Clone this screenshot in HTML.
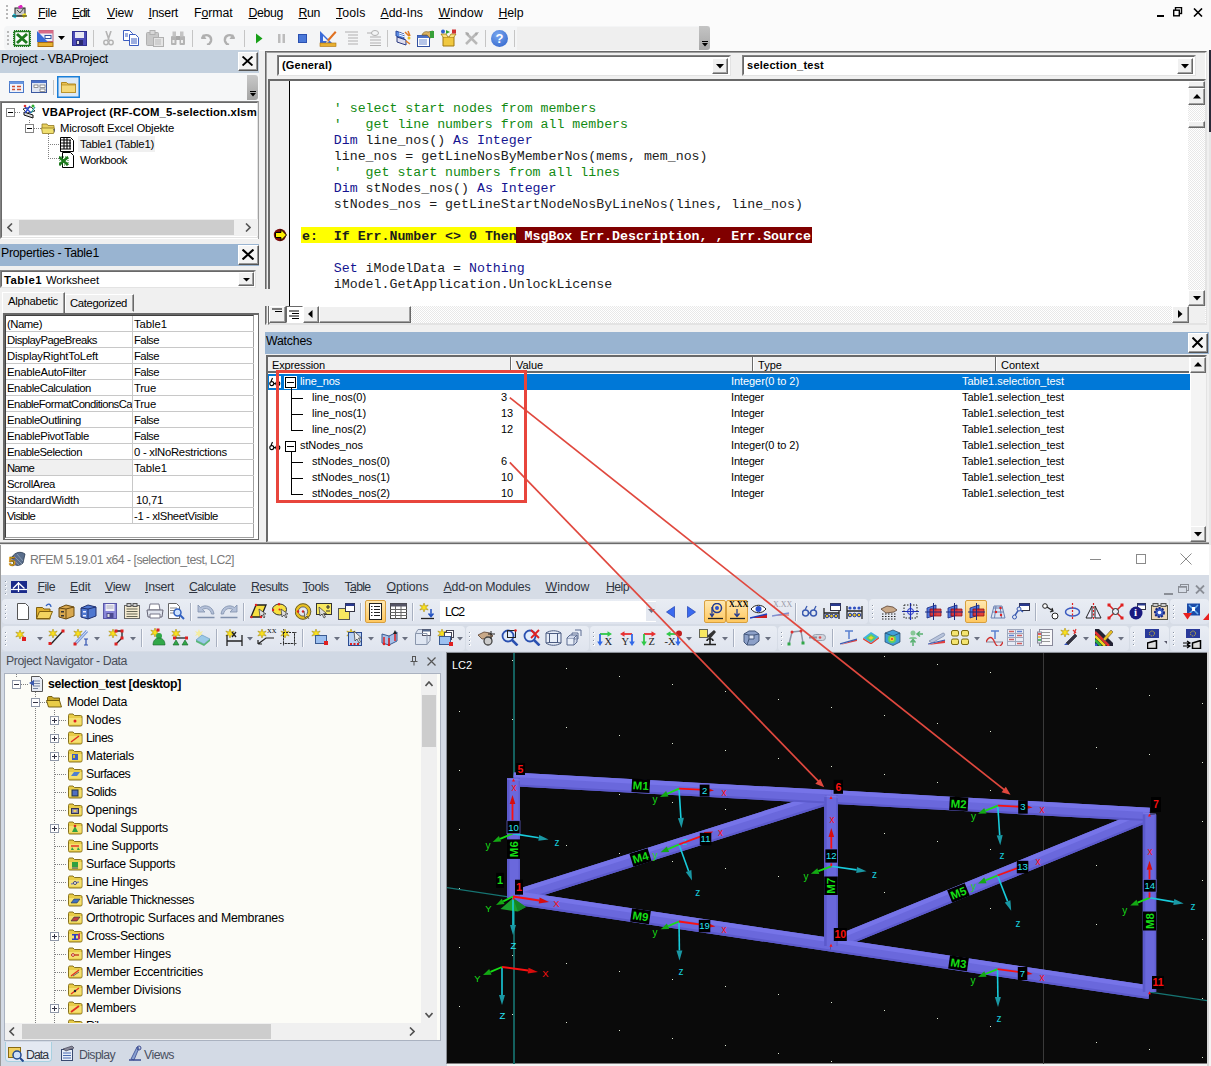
<!DOCTYPE html><html><head><meta charset="utf-8"><title>VBA RFEM</title><style>
html,body{margin:0;padding:0;background:#f0f0f0;}
body{width:1211px;height:1066px;overflow:hidden;position:relative;font-family:"Liberation Sans",sans-serif;font-size:12px;color:#000;}
div,span.t,span.m,span.c,svg{position:absolute;box-sizing:border-box;}
span.t{white-space:pre;line-height:1;}
span.m{white-space:pre;line-height:1;font-family:"Liberation Mono",monospace;font-size:13.25px;color:#1c1c1c;}
u{text-decoration:underline;text-underline-offset:1px;}
.sunk{border:1px solid;border-color:#828282 #fff #fff #828282;}
.btn{background:#f0f0f0;border:1px solid;border-color:#fff #696969 #696969 #fff;box-shadow:inset -1px -1px 0 #a0a0a0;}
</style></head><body><div style="left:0px;top:0px;width:1209px;height:51px;background:#fbfbfb;"></div>
<div style="left:1209px;top:0px;width:2px;height:545px;background:#e6e6e6;"></div>
<div style="left:1209px;top:0px;width:2px;height:50px;background:#fbfbfb;"></div>
<div style="left:1209px;top:50px;width:2px;height:82px;background:#2a2a38;"></div>
<div style="left:6px;top:5px;width:2px;height:2px;background:#b8b8b8;"></div>
<div style="left:6px;top:9px;width:2px;height:2px;background:#b8b8b8;"></div>
<div style="left:6px;top:13px;width:2px;height:2px;background:#b8b8b8;"></div>
<div style="left:6px;top:17px;width:2px;height:2px;background:#b8b8b8;"></div>
<svg style="left:12px;top:5px" width="17" height="15" viewBox="0 0 17 15"><rect x="3" y="3" width="10" height="8" fill="#c8c8c8" stroke="#222" stroke-width="1"/><path d="M5 5l3 3 4-5" stroke="#444" fill="none"/><rect x="6.5" y="0.5" width="4" height="3" fill="#e020c0" transform="rotate(-30 8 2)"/><rect x="0.5" y="9" width="4" height="3.5" fill="#20c8e0" transform="rotate(30 2 11)"/><rect x="10.5" y="9" width="4" height="3.5" fill="#f0e020" transform="rotate(-30 12 11)"/><path d="M0 11h15" stroke="#222"/></svg>
<span class="t" style="left:38px;top:7px;font-size:12.3px;letter-spacing:-0.330px;"><u>F</u>ile</span>
<span class="t" style="left:72px;top:7px;font-size:12.3px;letter-spacing:-1.049px;"><u>E</u>dit</span>
<span class="t" style="left:107px;top:7px;font-size:12.3px;letter-spacing:-0.110px;"><u>V</u>iew</span>
<span class="t" style="left:148.5px;top:7px;font-size:12.3px;letter-spacing:-0.210px;"><u>I</u>nsert</span>
<span class="t" style="left:194px;top:7px;font-size:12.3px;letter-spacing:-0.076px;">F<u>o</u>rmat</span>
<span class="t" style="left:248.5px;top:7px;font-size:12.3px;letter-spacing:-0.349px;"><u>D</u>ebug</span>
<span class="t" style="left:298.5px;top:7px;font-size:12.3px;letter-spacing:-0.355px;"><u>R</u>un</span>
<span class="t" style="left:336px;top:7px;font-size:12.3px;letter-spacing:0.157px;"><u>T</u>ools</span>
<span class="t" style="left:380.5px;top:7px;font-size:12.3px;letter-spacing:0.016px;"><u>A</u>dd-Ins</span>
<span class="t" style="left:438.5px;top:7px;font-size:12.3px;letter-spacing:0.126px;"><u>W</u>indow</span>
<span class="t" style="left:498.5px;top:7px;font-size:12.3px;letter-spacing:-0.074px;"><u>H</u>elp</span>
<div style="left:1157px;top:15px;width:7px;height:2px;background:#000;"></div>
<svg style="left:1173px;top:7px" width="10" height="10" viewBox="0 0 10 10"><rect x="2.5" y="0.5" width="6" height="6" fill="none" stroke="#000" stroke-width="1.4"/><rect x="0.7" y="3.2" width="5.6" height="5.6" fill="#fbfbfb" stroke="#000" stroke-width="1.4"/></svg>
<svg style="left:1193px;top:8px" width="10" height="9" viewBox="0 0 10 9"><path d="M1 0.5l8 8M9 0.5l-8 8" stroke="#000" stroke-width="1.6"/></svg>
<div style="left:4px;top:26px;width:706px;height:24px;background:#f4f5f6;border-radius:4px 0 0 4px;"></div>
<div style="left:517px;top:27px;width:183px;height:23px;background:#efefef;"></div>
<div style="left:699px;top:26px;width:11px;height:24px;background:linear-gradient(#c4c4c4,#a8a8a8);border-radius:0 3px 3px 0;"></div>
<div style="left:702px;top:41px;width:6px;height:1px;background:#000;"></div>
<svg style="left:702px;top:43px" width="6" height="4"><path d="M0 0h6l-3 3.5z" fill="#000"/></svg>
<div style="left:7px;top:31px;width:2px;height:2px;background:#b8b8b8;"></div>
<div style="left:7px;top:35px;width:2px;height:2px;background:#b8b8b8;"></div>
<div style="left:7px;top:39px;width:2px;height:2px;background:#b8b8b8;"></div>
<div style="left:7px;top:43px;width:2px;height:2px;background:#b8b8b8;"></div>
<svg style="left:13px;top:30px" width="18" height="17" viewBox="0 0 18 17"><rect x="1" y="1" width="16" height="15" fill="#fff" stroke="#1e7a1e" stroke-width="2" stroke-dasharray="1 1"/><rect x="1.5" y="1.5" width="15" height="14" fill="none" stroke="#1e7a1e" stroke-width="1.5"/><path d="M4 4l10 9M14 4l-10 9" stroke="#1e7a1e" stroke-width="3"/></svg>
<svg style="left:36px;top:30px" width="18" height="17" viewBox="0 0 18 17"><rect x="3" y="0.5" width="14" height="11" fill="#e8eef8" stroke="#c06078"/><rect x="3" y="0.5" width="14" height="3" fill="#d86a88"/><rect x="9" y="5.5" width="6" height="3" fill="#fff" stroke="#3050a0"/><path d="M1 1v11h11z" fill="#3a6ad8"/><rect x="2" y="12.5" width="15" height="4" fill="#e8b030" stroke="#a87010"/></svg>
<svg style="left:58px;top:36px" width="7" height="4" viewBox="0 0 7 4"><path d="M0 0h7l-3.5 4z" fill="#000"/></svg>
<svg style="left:72px;top:31px" width="15" height="15" viewBox="0 0 15 15"><rect x="0.5" y="0.5" width="14" height="14" fill="#4a4ab8" stroke="#303090"/><rect x="3" y="1" width="9" height="6" fill="#e8e8f4"/><rect x="4" y="9" width="7" height="5" fill="#2a2a70"/><rect x="5" y="10" width="2" height="3" fill="#ddd"/></svg>
<div style="left:93px;top:30px;width:1px;height:17px;background:#c5c5c5;"></div>
<svg style="left:103px;top:31px" width="11" height="15" viewBox="0 0 11 15"><path d="M3 0l3 9M8 0l-3 9" stroke="#b4b4b4" stroke-width="1.6" fill="none"/><circle cx="3" cy="11.5" r="2.2" fill="none" stroke="#b4b4b4" stroke-width="1.5"/><circle cx="8" cy="11.5" r="2.2" fill="none" stroke="#b4b4b4" stroke-width="1.5"/></svg>
<svg style="left:123px;top:30px" width="17" height="17" viewBox="0 0 17 17"><path d="M0.5 0.5h6l3 3v7h-9z" fill="#fff" stroke="#3a5cc0"/><path d="M6.5 4.500h6l3 3v8h-9z" fill="#fff" stroke="#3a5cc0"/><path d="M8 9h6M8 11h6M8 13h6" stroke="#3a5cc0"/><path d="M2 4h3M2 6h3" stroke="#3a5cc0"/></svg>
<svg style="left:146px;top:30px" width="19" height="17" viewBox="0 0 19 17"><rect x="0.5" y="2.5" width="12" height="13" rx="1" fill="#c8c8c8" stroke="#b0b0b0"/><rect x="4" y="0.500" width="5" height="4" fill="#d8d8d8" stroke="#b0b0b0"/><rect x="7.500" y="7.500" width="10" height="9" fill="#e4e4e4" stroke="#b0b0b0"/><path d="M9 10h6M9 12h6M9 14h6" stroke="#bbb"/></svg>
<svg style="left:170px;top:31px" width="16" height="15" viewBox="0 0 16 15"><rect x="1" y="5" width="5.500" height="9" rx="1" fill="#b4b4b4"/><rect x="9.500" y="5" width="5.500" height="9" rx="1" fill="#b4b4b4"/><rect x="2.500" y="0.500" width="3.500" height="5" fill="#c4c4c4"/><rect x="10" y="0.500" width="3.500" height="5" fill="#c4c4c4"/><rect x="6" y="5" width="4" height="4" fill="#a8a8a8"/><rect x="2.500" y="9" width="2" height="3" fill="#eee"/><rect x="11" y="9" width="2" height="3" fill="#eee"/></svg>
<div style="left:192px;top:30px;width:1px;height:17px;background:#c5c5c5;"></div>
<svg style="left:200px;top:32px" width="14" height="13" viewBox="0 0 14 13"><path d="M3 2l-2 5l5.500 0" fill="#b0b0b0"/><path d="M2 6c3-5 10-3 9 3c-.5 2-2 3.500-4 4" fill="none" stroke="#b0b0b0" stroke-width="2.400"/></svg>
<svg style="left:221.5px;top:32px" width="14" height="13" viewBox="0 0 14 13"><path d="M11 2l2 5l-5.500 0" fill="#b0b0b0"/><path d="M12 6c-3-5-10-3-9 3c.5 2 2 3.500 4 4" fill="none" stroke="#b0b0b0" stroke-width="2.400"/></svg>
<div style="left:244px;top:30px;width:1px;height:17px;background:#c5c5c5;"></div>
<svg style="left:255px;top:33px" width="8" height="11" viewBox="0 0 8 11"><path d="M1 0.500l6.500 5l-6.500 5z" fill="#18a018"/></svg>
<svg style="left:277px;top:34px" width="9" height="9" viewBox="0 0 9 9"><rect x="1" y="0" width="2.500" height="9" fill="#bcbcbc"/><rect x="5.500" y="0" width="2.500" height="9" fill="#bcbcbc"/></svg>
<svg style="left:298px;top:34px" width="9" height="9" viewBox="0 0 9 9"><rect x="0.500" y="0.500" width="8" height="8" fill="#4a78d8" stroke="#2a50b0"/></svg>
<svg style="left:319px;top:30px" width="18" height="17" viewBox="0 0 18 17"><path d="M1 1v12h12z" fill="#3a6ad8"/><path d="M4 6v5h5z" fill="#f4f5f6"/><rect x="1" y="13" width="16" height="3.500" fill="#e8b030" stroke="#a87010" stroke-width=".6"/><path d="M8 10l8-9l1.500 1.500l-8 9z" fill="#e07020"/><path d="M8 10l-1 3l3-1z" fill="#f0d0a0"/></svg>
<svg style="left:345px;top:31px" width="14" height="14" viewBox="0 0 14 14"><path d="M0 1h13M3 4h10M3 7h10M3 10h10M3 13h10" stroke="#b0b0b0" stroke-width="1.200"/></svg>
<svg style="left:366.5px;top:30px" width="15" height="16" viewBox="0 0 15 16"><ellipse cx="8" cy="3" rx="3.500" ry="2.500" fill="none" stroke="#b0b0b0"/><path d="M0 3h5M3 7h11M3 10h11M3 13h11M3 15.500h11" stroke="#b0b0b0" stroke-width="1.200"/></svg>
<div style="left:387px;top:30px;width:1px;height:17px;background:#c5c5c5;"></div>
<svg style="left:394px;top:29px" width="17" height="18" viewBox="0 0 17 18"><path d="M2 2l8 3v5l-8-3z" fill="#5a8ae0" stroke="#2a4aa0"/><path d="M3 8l9 3v5l-9-3z" fill="#dde" stroke="#2a3a80"/><path d="M5 4l6 2M5 6l6 2" stroke="#fff"/><path d="M11 3l4 4M14 2l2 5M12 12l4 3" stroke="#e07a20" stroke-width="1.500"/><circle cx="15" cy="9" r="1.500" fill="#e8c020"/></svg>
<svg style="left:416.5px;top:30px" width="17" height="17" viewBox="0 0 17 17"><rect x="0.500" y="5.500" width="12" height="11" fill="#fff" stroke="#3050a0"/><rect x="0.500" y="5.500" width="12" height="2.500" fill="#4a70c8"/><path d="M2 10h8M2 12h8M2 14h8" stroke="#6a8ad0"/><path d="M5 5c1-3 4-4 6-3l5-1v6l-3 1l-3-3z" fill="#d8b060" stroke="#806020" stroke-width=".7"/><path d="M13 1h4v7h-4z" fill="#38a038"/></svg>
<svg style="left:439.5px;top:29px" width="17" height="18" viewBox="0 0 17 18"><path d="M3 8h11v9h-11z" fill="#f0c840" stroke="#a07810"/><path d="M3 8l-2-3h5l2 3M14 8l2-3h-5l-2 3" fill="#f8e080" stroke="#a07810" stroke-width=".8"/><rect x="12" y="0.500" width="4" height="4" fill="#d03030"/><circle cx="3" cy="2.500" r="2" fill="#3060d0"/><path d="M6 1l4 2l-4 2z" fill="#30a030"/></svg>
<svg style="left:463.5px;top:31px" width="16" height="15" viewBox="0 0 16 15"><path d="M2 2l11 11M13 2l-11 11" stroke="#b8b8b8" stroke-width="2.500"/><path d="M1 1l4 1l-1 3z M15 1l-4 1l1 3z" fill="#a8a8a8"/></svg>
<div style="left:485px;top:30px;width:1px;height:17px;background:#c5c5c5;"></div>
<div style="left:491px;top:30px;width:17px;height:17px;border-radius:50%;background:radial-gradient(circle at 40% 30%,#7aa8f0,#2a5ec8);"></div>
<span class="t" style="left:495.5px;top:32px;font-size:13px;font-weight:bold;color:#fff;">?</span>
<div style="left:514px;top:30px;width:1px;height:17px;background:#c5c5c5;"></div>
<div style="left:0px;top:50px;width:259px;height:23px;background:#c3d0de;"></div>
<span class="t" style="left:1px;top:53px;font-size:12.3px;letter-spacing:-0.255px;">Project - VBAProject</span>
<div style="left:238px;top:52px;width:20px;height:19px;background:#f4f4f4;border:1px solid;border-color:#fff #555 #555 #fff;box-shadow:inset -1px -1px 0 #999;"></div>
<svg style="left:242px;top:56px" width="11" height="10" viewBox="0 0 10 10" preserveAspectRatio="none"><path d="M0.500 0.500l9 9M9.500 0.500l-9 9" stroke="#000" stroke-width="1.800"/></svg>
<div style="left:0px;top:73px;width:259px;height:28px;background:#f6f7f8;"></div>
<div style="left:247px;top:75px;width:11px;height:25px;background:linear-gradient(#c8c8c8,#a4a4a4);border-radius:0 3px 3px 0;"></div>
<div style="left:250px;top:91px;width:6px;height:1px;background:#000;"></div>
<svg style="left:250px;top:93px" width="6" height="4"><path d="M0 0h6l-3 3.500z" fill="#000"/></svg>
<svg style="left:9px;top:81px" width="15" height="12" viewBox="0 0 15 12"><rect x="0.500" y="0.500" width="14" height="11" fill="#f0f4fc" stroke="#4a78c8"/><rect x="0.500" y="0.500" width="14" height="2.500" fill="#6a98e0"/><path d="M3 5.500h3M8 5.500h4M3 8.500h3M8 8.500h4" stroke="#d05030" stroke-width="1.500"/></svg>
<svg style="left:31px;top:80px" width="16" height="13" viewBox="0 0 16 13"><rect x="0.500" y="0.500" width="15" height="12" fill="#e0e6f2" stroke="#3a58a0"/><rect x="0.500" y="0.500" width="15" height="2.500" fill="#4a70c8"/><rect x="3" y="5" width="4" height="2.500" fill="#fff" stroke="#555" stroke-width=".6"/><rect x="9" y="5" width="5" height="2.500" fill="#fff" stroke="#555" stroke-width=".6"/><rect x="9" y="9" width="5" height="2.500" fill="#fff" stroke="#555" stroke-width=".6"/></svg>
<div style="left:53px;top:80px;width:1px;height:15px;background:#c5c5c5;"></div>
<div style="left:57px;top:76px;width:23px;height:22px;background:#dce9f6;border:1px solid #1a7fd8;box-shadow:inset 0 0 0 .5px #1a7fd8;"></div>
<svg style="left:61px;top:81px" width="15" height="12" viewBox="0 0 15 12"><path d="M0.500 1.500h5l1.500 1.500h7.500v8.500h-14z" fill="#e8c050" stroke="#b08820"/><path d="M0.500 4h14v7.500h-14z" fill="#f4d878" stroke="#b08820" stroke-width=".7"/></svg>
<div style="left:0px;top:101px;width:259px;height:138px;background:#fff;border:1px solid;border-color:#828282 #fff #fff #828282;"></div>
<div style="left:1px;top:102px;width:257px;height:136px;border:1px solid;border-color:#696969 #e3e3e3 #e3e3e3 #696969;background:#fff;"></div>
<div style="left:258px;top:101px;width:1px;height:138px;background:#a0a0a0;"></div>
<div style="left:6px;top:108px;width:9px;height:9px;background:#fff;border:1px solid #848484;"></div>
<div style="left:8px;top:112px;width:5px;height:1px;background:#000;"></div>
<div style="left:15px;top:112px;width:6px;height:1px;background-image:linear-gradient(90deg,#808080 50%,transparent 50%);background-size:2px 1px;"></div>
<svg style="left:21px;top:103px" width="16" height="16" viewBox="0 0 16 16"><path d="M3 9l9 3v3l-9-3z" fill="#ddd" stroke="#111"/><path d="M2 6l8-2l4 4l-8 2z" fill="#fff" stroke="#111" stroke-width=".8"/><path d="M4 4l6 6M9 3l-5 7" stroke="#2a4ad0" stroke-width="1.300"/><circle cx="12" cy="3" r="1.500" fill="#30b030"/><circle cx="4" cy="3" r="1.300" fill="#e03030"/><path d="M10 10l4-6" stroke="#20a0a0" stroke-width="1.200"/></svg>
<span class="t" style="left:42px;top:106.5px;font-size:11.3px;letter-spacing:0.187px;font-weight:bold;">VBAProject (RF-COM_5-selection.xlsm</span>
<div style="left:29px;top:120px;width:1px;height:4px;background-image:linear-gradient(#808080 50%,transparent 50%);background-size:1px 2px;"></div>
<div style="left:25px;top:124px;width:9px;height:9px;background:#fff;border:1px solid #848484;"></div>
<div style="left:27px;top:128px;width:5px;height:1px;background:#000;"></div>
<div style="left:34px;top:128px;width:7px;height:1px;background-image:linear-gradient(90deg,#808080 50%,transparent 50%);background-size:2px 1px;"></div>
<svg style="left:41px;top:122px" width="15" height="12" viewBox="0 0 15 12"><path d="M1 2h5l1 1.500h6v3h-12z" fill="#e8d060" stroke="#907820" stroke-width=".8"/><path d="M0.500 6h13l-1 5.500h-11z" fill="#f0e070" stroke="#907820" stroke-width=".8"/><path d="M12 7l2 0v4z" fill="#666"/></svg>
<span class="t" style="left:60px;top:123px;font-size:11.3px;letter-spacing:-0.204px;">Microsoft Excel Objekte</span>
<div style="left:48px;top:134px;width:1px;height:24px;background-image:linear-gradient(#808080 50%,transparent 50%);background-size:1px 2px;"></div>
<div style="left:48px;top:144px;width:11px;height:1px;background-image:linear-gradient(90deg,#808080 50%,transparent 50%);background-size:2px 1px;"></div>
<div style="left:48px;top:158px;width:11px;height:1px;background-image:linear-gradient(90deg,#808080 50%,transparent 50%);background-size:2px 1px;"></div>
<div style="left:78px;top:136px;width:77px;height:16px;background:#f0f0f0;"></div>
<svg style="left:59px;top:137px" width="16" height="15" viewBox="0 0 16 15"><path d="M1.500 0.500h10l3 3v11h-13z" fill="#fff" stroke="#000"/><path d="M2 3h10M2 6h10M2 9h10M2 12h10M5 1v11M8 1v11M11 3v9" stroke="#000" stroke-width="1.100"/></svg>
<span class="t" style="left:80px;top:139px;font-size:11.3px;letter-spacing:-0.217px;">Table1 (Table1)</span>
<svg style="left:59px;top:152px" width="16" height="16" viewBox="0 0 16 16"><path d="M3.500 0.500h8l3 3v12h-11z" fill="#fff" stroke="#000"/><path d="M0 5l9 8M9 5l-9 8" stroke="#1e7a1e" stroke-width="2.500"/><rect x="0" y="5" width="9" height="8" fill="none" stroke="#1e7a1e" stroke-dasharray="1 1"/></svg>
<span class="t" style="left:80px;top:155px;font-size:11.3px;letter-spacing:-0.458px;">Workbook</span>
<div style="left:2px;top:219px;width:256px;height:17px;background:#f0f0f0;"></div>
<div style="left:19px;top:220px;width:215px;height:15px;background:#cdcdcd;"></div>
<svg style="left:7px;top:223px" width="6" height="9"><path d="M5 0.500l-4 4l4 4" stroke="#555" stroke-width="1.600" fill="none"/></svg>
<svg style="left:245px;top:223px" width="6" height="9"><path d="M1 0.500l4 4l-4 4" stroke="#555" stroke-width="1.600" fill="none"/></svg>
<div style="left:0px;top:239px;width:259px;height:5px;background:#f0f0f0;"></div>
<div style="left:0px;top:244px;width:259px;height:22px;background:#99b4d1;"></div>
<span class="t" style="left:1px;top:247px;font-size:12.3px;letter-spacing:-0.264px;">Properties - Table1</span>
<div style="left:238px;top:245px;width:21px;height:20px;background:#f4f4f4;border:1px solid;border-color:#fff #555 #555 #fff;box-shadow:inset -1px -1px 0 #999;"></div>
<svg style="left:242px;top:249px" width="12" height="11" viewBox="0 0 10 10" preserveAspectRatio="none"><path d="M0.500 0.500l9 9M9.500 0.500l-9 9" stroke="#000" stroke-width="1.800"/></svg>
<div style="left:0px;top:270px;width:256px;height:18px;background:#fff;border:1px solid;border-color:#828282 #e3e3e3 #e3e3e3 #828282;"></div>
<div style="left:1px;top:271px;width:254px;height:16px;border:1px solid;border-color:#696969 #fff #fff #696969;"></div>
<span class="t" style="left:4px;top:275px;font-size:11.3px;letter-spacing:0.507px;font-weight:bold;">Table1</span>
<span class="t" style="left:46px;top:275px;font-size:11.3px;letter-spacing:-0.089px;">Worksheet</span>
<div style="left:238px;top:272px;width:16px;height:14px;background:#f0f0f0;border:1px solid;border-color:#fff #696969 #696969 #fff;box-shadow:inset -1px -1px 0 #a0a0a0;"></div>
<svg style="left:243px;top:278px" width="7" height="4"><path d="M0 0h7l-3.500 3.500z" fill="#000"/></svg>
<div style="left:2px;top:292px;width:63px;height:22px;background:#f0f0f0;border:1px solid;border-color:#fff #696969 transparent #fff;box-shadow:inset -1px 0 0 #a0a0a0;"></div>
<span class="t" style="left:8px;top:296px;font-size:11.3px;letter-spacing:-0.277px;">Alphabetic</span>
<div style="left:65px;top:294px;width:69px;height:18px;background:#f0f0f0;border:1px solid;border-color:#fff #696969 transparent #fff;box-shadow:inset -1px 0 0 #a0a0a0;"></div>
<span class="t" style="left:70px;top:298px;font-size:11.3px;letter-spacing:-0.357px;">Categorized</span>
<div style="left:0px;top:313px;width:259px;height:230px;background:#f0f0f0;"></div>
<div style="left:3px;top:313px;width:256px;height:227px;background:#fff;border:2px solid #696969;border-right-width:1px;border-bottom-width:1px;"></div>
<div style="left:5px;top:315px;width:249px;height:223px;border:1px solid #a0a0a0;border-left-color:#404040;border-top-color:#404040;"></div>
<div style="left:6px;top:331px;width:248px;height:1px;background:#c8c8c8;"></div>
<div style="left:7px;top:316px;width:125px;height:15px;overflow:hidden;"><span class="t" style="left:0;top:3px;font-size:11.3px;letter-spacing:-0.445px">(Name)</span></div>
<span class="t" style="left:134px;top:319px;font-size:11.3px;letter-spacing:-0.050px;">Table1</span>
<div style="left:6px;top:347px;width:248px;height:1px;background:#c8c8c8;"></div>
<div style="left:7px;top:332px;width:125px;height:15px;overflow:hidden;"><span class="t" style="left:0;top:3px;font-size:11.3px;letter-spacing:-0.507px">DisplayPageBreaks</span></div>
<span class="t" style="left:134px;top:335px;font-size:11.3px;letter-spacing:-0.527px;">False</span>
<div style="left:6px;top:363px;width:248px;height:1px;background:#c8c8c8;"></div>
<div style="left:7px;top:348px;width:125px;height:15px;overflow:hidden;"><span class="t" style="left:0;top:3px;font-size:11.3px;letter-spacing:-0.178px">DisplayRightToLeft</span></div>
<span class="t" style="left:134px;top:351px;font-size:11.3px;letter-spacing:-0.527px;">False</span>
<div style="left:6px;top:379px;width:248px;height:1px;background:#c8c8c8;"></div>
<div style="left:7px;top:364px;width:125px;height:15px;overflow:hidden;"><span class="t" style="left:0;top:3px;font-size:11.3px;letter-spacing:-0.284px">EnableAutoFilter</span></div>
<span class="t" style="left:134px;top:367px;font-size:11.3px;letter-spacing:-0.527px;">False</span>
<div style="left:6px;top:395px;width:248px;height:1px;background:#c8c8c8;"></div>
<div style="left:7px;top:380px;width:125px;height:15px;overflow:hidden;"><span class="t" style="left:0;top:3px;font-size:11.3px;letter-spacing:-0.417px">EnableCalculation</span></div>
<span class="t" style="left:134px;top:383px;font-size:11.3px;letter-spacing:-0.204px;">True</span>
<div style="left:6px;top:411px;width:248px;height:1px;background:#c8c8c8;"></div>
<div style="left:7px;top:396px;width:125px;height:15px;overflow:hidden;"><span class="t" style="left:0;top:3px;font-size:11.3px;letter-spacing:-0.575px">EnableFormatConditionsCa</span></div>
<span class="t" style="left:134px;top:399px;font-size:11.3px;letter-spacing:-0.204px;">True</span>
<div style="left:6px;top:427px;width:248px;height:1px;background:#c8c8c8;"></div>
<div style="left:7px;top:412px;width:125px;height:15px;overflow:hidden;"><span class="t" style="left:0;top:3px;font-size:11.3px;letter-spacing:-0.386px">EnableOutlining</span></div>
<span class="t" style="left:134px;top:415px;font-size:11.3px;letter-spacing:-0.527px;">False</span>
<div style="left:6px;top:443px;width:248px;height:1px;background:#c8c8c8;"></div>
<div style="left:7px;top:428px;width:125px;height:15px;overflow:hidden;"><span class="t" style="left:0;top:3px;font-size:11.3px;letter-spacing:-0.333px">EnablePivotTable</span></div>
<span class="t" style="left:134px;top:431px;font-size:11.3px;letter-spacing:-0.527px;">False</span>
<div style="left:6px;top:459px;width:248px;height:1px;background:#c8c8c8;"></div>
<div style="left:7px;top:444px;width:125px;height:15px;overflow:hidden;"><span class="t" style="left:0;top:3px;font-size:11.3px;letter-spacing:-0.445px">EnableSelection</span></div>
<span class="t" style="left:134px;top:447px;font-size:11.3px;letter-spacing:-0.248px;">0 - xlNoRestrictions</span>
<div style="left:6px;top:460px;width:126px;height:15px;background:#f0f0f0;"></div>
<div style="left:6px;top:475px;width:248px;height:1px;background:#c8c8c8;"></div>
<div style="left:7px;top:460px;width:125px;height:15px;overflow:hidden;"><span class="t" style="left:0;top:3px;font-size:11.3px;letter-spacing:-0.786px">Name</span></div>
<span class="t" style="left:134px;top:463px;font-size:11.3px;letter-spacing:-0.050px;">Table1</span>
<div style="left:6px;top:491px;width:248px;height:1px;background:#c8c8c8;"></div>
<div style="left:7px;top:476px;width:125px;height:15px;overflow:hidden;"><span class="t" style="left:0;top:3px;font-size:11.3px;letter-spacing:-0.412px">ScrollArea</span></div>
<div style="left:6px;top:507px;width:248px;height:1px;background:#c8c8c8;"></div>
<div style="left:7px;top:492px;width:125px;height:15px;overflow:hidden;"><span class="t" style="left:0;top:3px;font-size:11.3px;letter-spacing:-0.211px">StandardWidth</span></div>
<span class="t" style="left:136px;top:495px;font-size:11.3px;letter-spacing:-0.255px;">10,71</span>
<div style="left:6px;top:523px;width:248px;height:1px;background:#c8c8c8;"></div>
<div style="left:7px;top:508px;width:125px;height:15px;overflow:hidden;"><span class="t" style="left:0;top:3px;font-size:11.3px;letter-spacing:-0.726px">Visible</span></div>
<span class="t" style="left:134px;top:511px;font-size:11.3px;letter-spacing:-0.361px;">-1 - xlSheetVisible</span>
<div style="left:132px;top:316px;width:1px;height:208px;background:#c8c8c8;"></div>
<div style="left:259px;top:51px;width:6px;height:492px;background:#f0f0f0;"></div>
<div style="left:265px;top:51px;width:942px;height:274px;background:#f0f0f0;border:2px solid;border-color:#696969 #e3e3e3 #e3e3e3 #696969;"></div>
<div style="left:266px;top:52px;width:940px;height:272px;border:1px solid;border-color:#a0a0a0 #fff #fff #a0a0a0;"></div>
<div style="left:277px;top:55px;width:454px;height:21px;background:#fff;border:2px solid;border-color:#828282 #e3e3e3 #e3e3e3 #828282;"></div>
<div style="left:278px;top:56px;width:452px;height:19px;border:1px solid;border-color:#696969 #fff #fff #696969;"></div>
<div style="left:712px;top:58px;width:16px;height:16px;background:#f0f0f0;border:1px solid;border-color:#fff #696969 #696969 #fff;box-shadow:inset -1px -1px 0 #a0a0a0;"></div>
<svg style="left:716px;top:64px" width="8" height="5"><path d="M0 0h8l-4 4.500z" fill="#000"/></svg>
<span class="t" style="left:282px;top:60px;font-size:11px;letter-spacing:0.190px;font-weight:bold;">(General)</span>
<div style="left:742px;top:55px;width:454px;height:21px;background:#fff;border:2px solid;border-color:#828282 #e3e3e3 #e3e3e3 #828282;"></div>
<div style="left:743px;top:56px;width:452px;height:19px;border:1px solid;border-color:#696969 #fff #fff #696969;"></div>
<div style="left:1177px;top:58px;width:16px;height:16px;background:#f0f0f0;border:1px solid;border-color:#fff #696969 #696969 #fff;box-shadow:inset -1px -1px 0 #a0a0a0;"></div>
<svg style="left:1181px;top:64px" width="8" height="5"><path d="M0 0h8l-4 4.500z" fill="#000"/></svg>
<span class="t" style="left:747px;top:60px;font-size:11px;letter-spacing:0.260px;font-weight:bold;">selection_test</span>
<div style="left:268px;top:79px;width:938px;height:246px;background:#fff;border:2px solid;border-color:#696969 #e3e3e3 #e3e3e3 #696969;"></div>
<div style="left:270px;top:81px;width:19px;height:225px;background:#f0f0f0;"></div>
<div style="left:289px;top:81px;width:1px;height:225px;background:#000;"></div>
<div style="left:290px;top:81px;width:2px;height:225px;background:#fff;"></div>
<div style="left:259px;top:289px;width:11px;height:17px;background:#f0f0f0;"></div>
<span class="m" style="left:333.80px;top:101.5px;color:#128a12;">' select start nodes from members</span>
<span class="m" style="left:333.80px;top:117.5px;color:#128a12;">'   get line numbers from all members</span>
<span class="m" style="left:333.80px;top:133.5px;"><span style="color:#141490">Dim</span> line_nos() <span style="color:#141490">As Integer</span></span>
<span class="m" style="left:333.80px;top:149.5px;">line_nos = getLineNosByMemberNos(mems, mem_nos)</span>
<span class="m" style="left:333.80px;top:165.5px;color:#128a12;">'   get start numbers from all lines</span>
<span class="m" style="left:333.80px;top:181.5px;"><span style="color:#141490">Dim</span> stNodes_nos() <span style="color:#141490">As Integer</span></span>
<span class="m" style="left:333.80px;top:197.5px;">stNodes_nos = getLineStartNodeNosByLineNos(lines, line_nos)</span>
<div style="left:301px;top:227px;width:215px;height:16px;background:#ffff00;"></div>
<div style="left:516px;top:227px;width:296px;height:16px;background:#800000;"></div>
<span class="m" style="left:302.00px;top:229.5px;font-weight:bold;">e:  If Err.Number &lt;&gt; 0 Then</span>
<span class="m" style="left:524.60px;top:229.5px;font-weight:bold;color:#fff;">MsgBox Err.Description, , Err.Source</span>
<span class="m" style="left:333.80px;top:261.5px;"><span style="color:#141490">Set</span> iModelData = <span style="color:#141490">Nothing</span></span>
<span class="m" style="left:333.80px;top:277.5px;">iModel.GetApplication.UnlockLicense</span>
<svg style="left:273px;top:228px" width="15" height="14" viewBox="0 0 15 14"><circle cx="7" cy="7" r="6.200" fill="#7a0c0c"/><path d="M2.500 4.500h5.500v-3l5.500 5.500l-5.500 5.500v-3h-5.500z" fill="#ffee00" stroke="#000" stroke-width="1"/></svg>
<div style="left:1188px;top:81px;width:17px;height:225px;background-color:#fff;background-image:linear-gradient(45deg,#e8e8e8 25%,transparent 25%,transparent 75%,#e8e8e8 75%),linear-gradient(45deg,#e8e8e8 25%,transparent 25%,transparent 75%,#e8e8e8 75%);background-size:2px 2px;background-position:0 0,1px 1px;"></div>
<div style="left:1188px;top:81px;width:17px;height:7px;background:#f0f0f0;border:1px solid;border-color:#fff #696969 #696969 #fff;box-shadow:inset -1px -1px 0 #a0a0a0;"></div>
<div style="left:1188px;top:88px;width:17px;height:17px;background:#f0f0f0;border:1px solid;border-color:#fff #696969 #696969 #fff;box-shadow:inset -1px -1px 0 #a0a0a0;"></div>
<svg style="left:1193px;top:94px" width="8" height="5"><path d="M0 4.500h8l-4-4.500z" fill="#000"/></svg>
<div style="left:1188px;top:121px;width:17px;height:7px;background:#f0f0f0;border:1px solid;border-color:#fff #696969 #696969 #fff;box-shadow:inset -1px -1px 0 #a0a0a0;"></div>
<div style="left:1188px;top:290px;width:17px;height:16px;background:#f0f0f0;border:1px solid;border-color:#fff #696969 #696969 #fff;box-shadow:inset -1px -1px 0 #a0a0a0;"></div>
<svg style="left:1193px;top:296px" width="8" height="5"><path d="M0 0h8l-4 4.500z" fill="#000"/></svg>
<div style="left:269px;top:306px;width:937px;height:17px;background-color:#fff;background-image:linear-gradient(45deg,#e8e8e8 25%,transparent 25%,transparent 75%,#e8e8e8 75%),linear-gradient(45deg,#e8e8e8 25%,transparent 25%,transparent 75%,#e8e8e8 75%);background-size:2px 2px;background-position:0 0,1px 1px;"></div>
<div style="left:269px;top:306px;width:17px;height:17px;background:#f0f0f0;border:1px solid;border-color:#fff #696969 #696969 #fff;box-shadow:inset -1px -1px 0 #a0a0a0;"></div>
<div style="left:286px;top:306px;width:17px;height:17px;background:#fff;border:1px solid;border-color:#696969 #fff #fff #696969;"></div>
<svg style="left:272px;top:308px" width="11" height="6"><path d="M0 1h10M3 3.500h7" stroke="#000" stroke-width="1.200"/></svg>
<svg style="left:289px;top:310px" width="11" height="10"><path d="M0 1h10M3 3.500h7M0 6h10M3 8.500h7" stroke="#000" stroke-width="1.200"/></svg>
<div style="left:303px;top:306px;width:16px;height:17px;background:#f0f0f0;border:1px solid;border-color:#fff #696969 #696969 #fff;box-shadow:inset -1px -1px 0 #a0a0a0;"></div>
<svg style="left:308px;top:310px" width="5" height="8"><path d="M4.500 0v8l-4.500-4z" fill="#000"/></svg>
<div style="left:319px;top:306px;width:92px;height:17px;background:#f0f0f0;border:1px solid;border-color:#fff #696969 #696969 #fff;box-shadow:inset -1px -1px 0 #a0a0a0;"></div>
<div style="left:1172px;top:306px;width:17px;height:17px;background:#f0f0f0;border:1px solid;border-color:#fff #696969 #696969 #fff;box-shadow:inset -1px -1px 0 #a0a0a0;"></div>
<svg style="left:1178px;top:310px" width="5" height="8"><path d="M0 0v8l4.500-4z" fill="#000"/></svg>
<div style="left:1189px;top:306px;width:16px;height:17px;background:#f0f0f0;"></div>
<div style="left:265px;top:325px;width:944px;height:7px;background:#f0f0f0;"></div>
<div style="left:265px;top:332px;width:944px;height:22px;background:#99b4d1;"></div>
<span class="t" style="left:266px;top:335px;font-size:12.3px;letter-spacing:-0.199px;">Watches</span>
<div style="left:1188px;top:333px;width:20px;height:20px;background:#f4f4f4;border:1px solid;border-color:#fff #555 #555 #fff;box-shadow:inset -1px -1px 0 #999;"></div>
<svg style="left:1192px;top:337px" width="11" height="11" viewBox="0 0 10 10" preserveAspectRatio="none"><path d="M0.500 0.500l9 9M9.500 0.500l-9 9" stroke="#000" stroke-width="1.800"/></svg>
<div style="left:265px;top:354px;width:944px;height:189px;background:#f0f0f0;"></div>
<div style="left:266px;top:355px;width:941px;height:188px;background:#fff;border:2px solid;border-color:#696969 #e3e3e3 #e3e3e3 #696969;"></div>
<div style="left:268px;top:357px;width:921px;height:15px;background:#f0f0f0;"></div>
<div style="left:268px;top:371px;width:921px;height:2px;background:#696969;"></div>
<div style="left:510px;top:357px;width:1px;height:14px;background:#696969;"></div>
<div style="left:511px;top:357px;width:1px;height:14px;background:#fff;"></div>
<div style="left:752px;top:357px;width:1px;height:14px;background:#696969;"></div>
<div style="left:753px;top:357px;width:1px;height:14px;background:#fff;"></div>
<div style="left:995px;top:357px;width:1px;height:14px;background:#696969;"></div>
<div style="left:996px;top:357px;width:1px;height:14px;background:#fff;"></div>
<span class="t" style="left:272px;top:360px;font-size:11px;letter-spacing:-0.141px;">Expression</span>
<span class="t" style="left:516px;top:360px;font-size:11px;letter-spacing:-0.063px;">Value</span>
<span class="t" style="left:758px;top:360px;font-size:11px;letter-spacing:0.038px;">Type</span>
<span class="t" style="left:1001px;top:360px;font-size:11px;letter-spacing:0.013px;">Context</span>
<div style="left:1190px;top:357px;width:16px;height:185px;background:#f0f0f0;"></div>
<div style="left:1190px;top:357px;width:16px;height:16px;background:#f0f0f0;border:1px solid;border-color:#fff #696969 #696969 #fff;box-shadow:inset -1px -1px 0 #a0a0a0;"></div>
<svg style="left:1194px;top:362px" width="8" height="5"><path d="M0 4.500h8l-4-4.500z" fill="#000"/></svg>
<div style="left:1190px;top:373px;width:16px;height:153px;background:#f4f4f4;border-left:1px solid #fff;"></div>
<div style="left:1190px;top:526px;width:16px;height:16px;background:#f0f0f0;border:1px solid;border-color:#fff #696969 #696969 #fff;box-shadow:inset -1px -1px 0 #a0a0a0;"></div>
<svg style="left:1194px;top:532px" width="8" height="5"><path d="M0 0h8l-4 4.500z" fill="#000"/></svg>
<div style="left:268px;top:374px;width:922px;height:16px;background:#0078d7;"></div>
<span class="t" style="left:300px;top:376px;font-size:11px;letter-spacing:-0.122px;color:#fff;">line_nos</span>
<span class="t" style="left:731px;top:376px;font-size:11px;letter-spacing:-0.073px;color:#fff;">Integer(0 to 2)</span>
<span class="t" style="left:962px;top:376px;font-size:11px;letter-spacing:-0.035px;color:#fff;">Table1.selection_test</span>
<div style="left:269px;top:376px;width:12px;height:12px;background:#fff;"></div>
<svg style="left:269px;top:376px" width="12" height="12" viewBox="0 0 12 12"><circle cx="2.800" cy="7.600" r="2" fill="none" stroke="#000" stroke-width="1.100"/><circle cx="8.800" cy="7.600" r="2" fill="none" stroke="#000" stroke-width="1.100"/><path d="M2 5.500l1.500-3.500M8 5.500l1.500-3.500M4.800 7.600h2" stroke="#000" stroke-width="1.100" fill="none"/></svg>
<div style="left:284px;top:376px;width:13px;height:13px;background:#fff;"></div>
<div style="left:285px;top:377px;width:11px;height:11px;background:#fff;border:1px solid #000;"></div>
<div style="left:287px;top:382px;width:7px;height:1px;background:#000;"></div>
<span class="t" style="left:312px;top:392px;font-size:11px;letter-spacing:-0.038px;">line_nos(0)</span>
<span class="t" style="left:731px;top:392px;font-size:11px;letter-spacing:-0.178px;">Integer</span>
<span class="t" style="left:962px;top:392px;font-size:11px;letter-spacing:-0.035px;">Table1.selection_test</span>
<span class="t" style="left:501px;top:392px;font-size:11px;letter-spacing:0.000px;">3</span>
<div style="left:291px;top:388px;width:1px;height:10px;background:#000;"></div>
<div style="left:291px;top:398px;width:1px;height:8px;background:#000;"></div>
<div style="left:291px;top:398px;width:12px;height:1px;background:#000;"></div>
<span class="t" style="left:312px;top:408px;font-size:11px;letter-spacing:-0.038px;">line_nos(1)</span>
<span class="t" style="left:731px;top:408px;font-size:11px;letter-spacing:-0.178px;">Integer</span>
<span class="t" style="left:962px;top:408px;font-size:11px;letter-spacing:-0.035px;">Table1.selection_test</span>
<span class="t" style="left:501px;top:408px;font-size:11px;letter-spacing:0.000px;">13</span>
<div style="left:291px;top:406px;width:1px;height:8px;background:#000;"></div>
<div style="left:291px;top:414px;width:1px;height:8px;background:#000;"></div>
<div style="left:291px;top:414px;width:12px;height:1px;background:#000;"></div>
<span class="t" style="left:312px;top:424px;font-size:11px;letter-spacing:-0.038px;">line_nos(2)</span>
<span class="t" style="left:731px;top:424px;font-size:11px;letter-spacing:-0.178px;">Integer</span>
<span class="t" style="left:962px;top:424px;font-size:11px;letter-spacing:-0.035px;">Table1.selection_test</span>
<span class="t" style="left:501px;top:424px;font-size:11px;letter-spacing:0.000px;">12</span>
<div style="left:291px;top:422px;width:1px;height:8px;background:#000;"></div>
<div style="left:291px;top:430px;width:12px;height:1px;background:#000;"></div>
<span class="t" style="left:300px;top:440px;font-size:11px;letter-spacing:-0.109px;">stNodes_nos</span>
<span class="t" style="left:731px;top:440px;font-size:11px;letter-spacing:-0.073px;">Integer(0 to 2)</span>
<span class="t" style="left:962px;top:440px;font-size:11px;letter-spacing:-0.035px;">Table1.selection_test</span>
<div style="left:269px;top:440px;width:12px;height:12px;background:#fff;"></div>
<svg style="left:269px;top:440px" width="12" height="12" viewBox="0 0 12 12"><circle cx="2.800" cy="7.600" r="2" fill="none" stroke="#000" stroke-width="1.100"/><circle cx="8.800" cy="7.600" r="2" fill="none" stroke="#000" stroke-width="1.100"/><path d="M2 5.500l1.500-3.500M8 5.500l1.500-3.500M4.800 7.600h2" stroke="#000" stroke-width="1.100" fill="none"/></svg>
<div style="left:284px;top:440px;width:13px;height:13px;background:#fff;"></div>
<div style="left:285px;top:441px;width:11px;height:11px;background:#fff;border:1px solid #000;"></div>
<div style="left:287px;top:446px;width:7px;height:1px;background:#000;"></div>
<span class="t" style="left:312px;top:456px;font-size:11px;letter-spacing:0.025px;">stNodes_nos(0)</span>
<span class="t" style="left:731px;top:456px;font-size:11px;letter-spacing:-0.178px;">Integer</span>
<span class="t" style="left:962px;top:456px;font-size:11px;letter-spacing:-0.035px;">Table1.selection_test</span>
<span class="t" style="left:501px;top:456px;font-size:11px;letter-spacing:0.000px;">6</span>
<div style="left:291px;top:452px;width:1px;height:10px;background:#000;"></div>
<div style="left:291px;top:462px;width:1px;height:8px;background:#000;"></div>
<div style="left:291px;top:462px;width:12px;height:1px;background:#000;"></div>
<span class="t" style="left:312px;top:472px;font-size:11px;letter-spacing:0.025px;">stNodes_nos(1)</span>
<span class="t" style="left:731px;top:472px;font-size:11px;letter-spacing:-0.178px;">Integer</span>
<span class="t" style="left:962px;top:472px;font-size:11px;letter-spacing:-0.035px;">Table1.selection_test</span>
<span class="t" style="left:501px;top:472px;font-size:11px;letter-spacing:0.000px;">10</span>
<div style="left:291px;top:470px;width:1px;height:8px;background:#000;"></div>
<div style="left:291px;top:478px;width:1px;height:8px;background:#000;"></div>
<div style="left:291px;top:478px;width:12px;height:1px;background:#000;"></div>
<span class="t" style="left:312px;top:488px;font-size:11px;letter-spacing:0.025px;">stNodes_nos(2)</span>
<span class="t" style="left:731px;top:488px;font-size:11px;letter-spacing:-0.178px;">Integer</span>
<span class="t" style="left:962px;top:488px;font-size:11px;letter-spacing:-0.035px;">Table1.selection_test</span>
<span class="t" style="left:501px;top:488px;font-size:11px;letter-spacing:0.000px;">10</span>
<div style="left:291px;top:486px;width:1px;height:8px;background:#000;"></div>
<div style="left:291px;top:494px;width:12px;height:1px;background:#000;"></div>
<div style="left:276px;top:370px;width:251px;height:133px;border:3px solid #e8453c;"></div>
<div style="left:0px;top:542px;width:1209px;height:1px;background:#a8a8a8;"></div>
<div style="left:0px;top:543px;width:1209px;height:1px;background:#6a6a6a;"></div>
<div style="left:0px;top:544px;width:1209px;height:1px;background:#e8e8e8;"></div>
<div style="left:0px;top:545px;width:1209px;height:521px;background:#fff;"></div>
<div style="left:1209px;top:545px;width:2px;height:521px;background:#f4f4f4;"></div>
<div style="left:0px;top:545px;width:1px;height:521px;background:#9a9a9a;"></div>
<svg style="left:9px;top:551px" width="17" height="17" viewBox="0 0 17 17"><path d="M3 6c3-5 9-6 13-3l-2 9c-3 3-7 3-9 1z" fill="#5a6e8c" stroke="#2a3a50" stroke-width=".8"/><path d="M5 5l8 8M8 3l6 7M3 8l7 6" stroke="#9ab" stroke-width=".7"/></svg>
<span class="t" style="left:1px;top:556px;font-size:12px;font-weight:bold;color:#e8b020;left:9px;-webkit-text-stroke:.5px #604000;">5</span>
<span class="t" style="left:30px;top:554px;font-size:12.3px;letter-spacing:-0.523px;color:#7a7a7a;">RFEM 5.19.01 x64 - [selection_test, LC2]</span>
<div style="left:1090px;top:559px;width:11px;height:1px;background:#8a8a8a;"></div>
<div style="left:1136px;top:554px;width:10px;height:10px;border:1px solid #8a8a8a;"></div>
<svg style="left:1180px;top:553px" width="12" height="12"><path d="M0.500 0.500l11 11M11.500 0.500l-11 11" stroke="#8a8a8a" stroke-width="1"/></svg>
<div style="left:1px;top:575px;width:1208px;height:24px;background:#d6dce6;"></div>
<div style="left:5px;top:581px;width:2px;height:2px;background:#f4f6fa;"></div>
<div style="left:5px;top:581px;width:1px;height:1px;background:#8a94a4;"></div>
<div style="left:5px;top:585px;width:2px;height:2px;background:#f4f6fa;"></div>
<div style="left:5px;top:585px;width:1px;height:1px;background:#8a94a4;"></div>
<div style="left:5px;top:589px;width:2px;height:2px;background:#f4f6fa;"></div>
<div style="left:5px;top:589px;width:1px;height:1px;background:#8a94a4;"></div>
<div style="left:5px;top:593px;width:2px;height:2px;background:#f4f6fa;"></div>
<div style="left:5px;top:593px;width:1px;height:1px;background:#8a94a4;"></div>
<svg style="left:11px;top:581px" width="16" height="12" viewBox="0 0 16 12"><rect width="16" height="12" fill="#1a2a8a"/><path d="M0 8.500h16" stroke="#fff" stroke-width="1.200"/><path d="M7.500 1v10M2 7.500l5.500-5.500l6 5.500" stroke="#fff" stroke-width="1.300" fill="none"/></svg>
<span class="t" style="left:37.5px;top:581px;font-size:12.3px;letter-spacing:-0.580px;color:#2e3440;"><u>F</u>ile</span>
<span class="t" style="left:70px;top:581px;font-size:12.3px;letter-spacing:-0.174px;color:#2e3440;"><u>E</u>dit</span>
<span class="t" style="left:105px;top:581px;font-size:12.3px;letter-spacing:-0.360px;color:#2e3440;"><u>V</u>iew</span>
<span class="t" style="left:145px;top:581px;font-size:12.3px;letter-spacing:-0.293px;color:#2e3440;"><u>I</u>nsert</span>
<span class="t" style="left:189px;top:581px;font-size:12.3px;letter-spacing:-0.531px;color:#2e3440;"><u>C</u>alculate</span>
<span class="t" style="left:251px;top:581px;font-size:12.3px;letter-spacing:-0.573px;color:#2e3440;"><u>R</u>esults</span>
<span class="t" style="left:302.5px;top:581px;font-size:12.3px;letter-spacing:-0.543px;color:#2e3440;"><u>T</u>ools</span>
<span class="t" style="left:344.5px;top:581px;font-size:12.3px;letter-spacing:-0.681px;color:#2e3440;">T<u>a</u>ble</span>
<span class="t" style="left:386.5px;top:581px;font-size:12.3px;letter-spacing:-0.056px;color:#2e3440;"><u>O</u>ptions</span>
<span class="t" style="left:443.5px;top:581px;font-size:12.3px;letter-spacing:-0.184px;color:#2e3440;"><u>A</u>dd-on Modules</span>
<span class="t" style="left:545.5px;top:581px;font-size:12.3px;letter-spacing:0.042px;color:#2e3440;"><u>W</u>indow</span>
<span class="t" style="left:606px;top:581px;font-size:12.3px;letter-spacing:-0.574px;color:#2e3440;"><u>H</u>elp</span>
<div style="left:1164px;top:593px;width:9px;height:2px;background:#8a8e96;"></div>
<svg style="left:1178px;top:584px" width="11" height="10"><rect x="2.500" y="0.500" width="8" height="6" fill="none" stroke="#8a8e96"/><rect x="0.500" y="2.500" width="8" height="6" fill="#d6dce6" stroke="#8a8e96"/><path d="M0 3h9" stroke="#8a8e96" stroke-width="1.500"/></svg>
<svg style="left:1195px;top:585px" width="10" height="9"><path d="M1 0.500l8 8M9 0.500l-8 8" stroke="#8a8e96" stroke-width="1.800"/></svg>
<div style="left:1px;top:599px;width:1208px;height:53px;background:#d6dce6;"></div>
<div style="left:2px;top:599px;width:866px;height:25px;background:linear-gradient(#e9edf4,#dfe4ee);border-radius:4px;"></div>
<div style="left:5px;top:605px;width:2px;height:2px;background:#fafbfd;"></div>
<div style="left:5px;top:605px;width:1px;height:1px;background:#8a94a4;"></div>
<div style="left:5px;top:609px;width:2px;height:2px;background:#fafbfd;"></div>
<div style="left:5px;top:609px;width:1px;height:1px;background:#8a94a4;"></div>
<div style="left:5px;top:613px;width:2px;height:2px;background:#fafbfd;"></div>
<div style="left:5px;top:613px;width:1px;height:1px;background:#8a94a4;"></div>
<div style="left:5px;top:617px;width:2px;height:2px;background:#fafbfd;"></div>
<div style="left:5px;top:617px;width:1px;height:1px;background:#8a94a4;"></div>
<div style="left:869px;top:599px;width:300px;height:25px;background:linear-gradient(#e9edf4,#dfe4ee);border-radius:4px;"></div>
<div style="left:872px;top:605px;width:2px;height:2px;background:#fafbfd;"></div>
<div style="left:872px;top:605px;width:1px;height:1px;background:#8a94a4;"></div>
<div style="left:872px;top:609px;width:2px;height:2px;background:#fafbfd;"></div>
<div style="left:872px;top:609px;width:1px;height:1px;background:#8a94a4;"></div>
<div style="left:872px;top:613px;width:2px;height:2px;background:#fafbfd;"></div>
<div style="left:872px;top:613px;width:1px;height:1px;background:#8a94a4;"></div>
<div style="left:872px;top:617px;width:2px;height:2px;background:#fafbfd;"></div>
<div style="left:872px;top:617px;width:1px;height:1px;background:#8a94a4;"></div>
<div style="left:1170px;top:599px;width:39px;height:25px;background:linear-gradient(#e9edf4,#dfe4ee);border-radius:4px;"></div>
<div style="left:1173px;top:605px;width:2px;height:2px;background:#fafbfd;"></div>
<div style="left:1173px;top:605px;width:1px;height:1px;background:#8a94a4;"></div>
<div style="left:1173px;top:609px;width:2px;height:2px;background:#fafbfd;"></div>
<div style="left:1173px;top:609px;width:1px;height:1px;background:#8a94a4;"></div>
<div style="left:1173px;top:613px;width:2px;height:2px;background:#fafbfd;"></div>
<div style="left:1173px;top:613px;width:1px;height:1px;background:#8a94a4;"></div>
<div style="left:1173px;top:617px;width:2px;height:2px;background:#fafbfd;"></div>
<div style="left:1173px;top:617px;width:1px;height:1px;background:#8a94a4;"></div>
<div style="left:2px;top:626px;width:463px;height:25px;background:linear-gradient(#e9edf4,#dfe4ee);border-radius:4px;"></div>
<div style="left:5px;top:632px;width:2px;height:2px;background:#fafbfd;"></div>
<div style="left:5px;top:632px;width:1px;height:1px;background:#8a94a4;"></div>
<div style="left:5px;top:636px;width:2px;height:2px;background:#fafbfd;"></div>
<div style="left:5px;top:636px;width:1px;height:1px;background:#8a94a4;"></div>
<div style="left:5px;top:640px;width:2px;height:2px;background:#fafbfd;"></div>
<div style="left:5px;top:640px;width:1px;height:1px;background:#8a94a4;"></div>
<div style="left:5px;top:644px;width:2px;height:2px;background:#fafbfd;"></div>
<div style="left:5px;top:644px;width:1px;height:1px;background:#8a94a4;"></div>
<div style="left:466px;top:626px;width:123px;height:25px;background:linear-gradient(#e9edf4,#dfe4ee);border-radius:4px;"></div>
<div style="left:469px;top:632px;width:2px;height:2px;background:#fafbfd;"></div>
<div style="left:469px;top:632px;width:1px;height:1px;background:#8a94a4;"></div>
<div style="left:469px;top:636px;width:2px;height:2px;background:#fafbfd;"></div>
<div style="left:469px;top:636px;width:1px;height:1px;background:#8a94a4;"></div>
<div style="left:469px;top:640px;width:2px;height:2px;background:#fafbfd;"></div>
<div style="left:469px;top:640px;width:1px;height:1px;background:#8a94a4;"></div>
<div style="left:469px;top:644px;width:2px;height:2px;background:#fafbfd;"></div>
<div style="left:469px;top:644px;width:1px;height:1px;background:#8a94a4;"></div>
<div style="left:590px;top:626px;width:187px;height:25px;background:linear-gradient(#e9edf4,#dfe4ee);border-radius:4px;"></div>
<div style="left:593px;top:632px;width:2px;height:2px;background:#fafbfd;"></div>
<div style="left:593px;top:632px;width:1px;height:1px;background:#8a94a4;"></div>
<div style="left:593px;top:636px;width:2px;height:2px;background:#fafbfd;"></div>
<div style="left:593px;top:636px;width:1px;height:1px;background:#8a94a4;"></div>
<div style="left:593px;top:640px;width:2px;height:2px;background:#fafbfd;"></div>
<div style="left:593px;top:640px;width:1px;height:1px;background:#8a94a4;"></div>
<div style="left:593px;top:644px;width:2px;height:2px;background:#fafbfd;"></div>
<div style="left:593px;top:644px;width:1px;height:1px;background:#8a94a4;"></div>
<div style="left:778px;top:626px;width:351px;height:25px;background:linear-gradient(#e9edf4,#dfe4ee);border-radius:4px;"></div>
<div style="left:781px;top:632px;width:2px;height:2px;background:#fafbfd;"></div>
<div style="left:781px;top:632px;width:1px;height:1px;background:#8a94a4;"></div>
<div style="left:781px;top:636px;width:2px;height:2px;background:#fafbfd;"></div>
<div style="left:781px;top:636px;width:1px;height:1px;background:#8a94a4;"></div>
<div style="left:781px;top:640px;width:2px;height:2px;background:#fafbfd;"></div>
<div style="left:781px;top:640px;width:1px;height:1px;background:#8a94a4;"></div>
<div style="left:781px;top:644px;width:2px;height:2px;background:#fafbfd;"></div>
<div style="left:781px;top:644px;width:1px;height:1px;background:#8a94a4;"></div>
<div style="left:1130px;top:626px;width:39px;height:25px;background:linear-gradient(#e9edf4,#dfe4ee);border-radius:4px;"></div>
<div style="left:1133px;top:632px;width:2px;height:2px;background:#fafbfd;"></div>
<div style="left:1133px;top:632px;width:1px;height:1px;background:#8a94a4;"></div>
<div style="left:1133px;top:636px;width:2px;height:2px;background:#fafbfd;"></div>
<div style="left:1133px;top:636px;width:1px;height:1px;background:#8a94a4;"></div>
<div style="left:1133px;top:640px;width:2px;height:2px;background:#fafbfd;"></div>
<div style="left:1133px;top:640px;width:1px;height:1px;background:#8a94a4;"></div>
<div style="left:1133px;top:644px;width:2px;height:2px;background:#fafbfd;"></div>
<div style="left:1133px;top:644px;width:1px;height:1px;background:#8a94a4;"></div>
<div style="left:1170px;top:626px;width:39px;height:25px;background:linear-gradient(#e9edf4,#dfe4ee);border-radius:4px;"></div>
<div style="left:1173px;top:632px;width:2px;height:2px;background:#fafbfd;"></div>
<div style="left:1173px;top:632px;width:1px;height:1px;background:#8a94a4;"></div>
<div style="left:1173px;top:636px;width:2px;height:2px;background:#fafbfd;"></div>
<div style="left:1173px;top:636px;width:1px;height:1px;background:#8a94a4;"></div>
<div style="left:1173px;top:640px;width:2px;height:2px;background:#fafbfd;"></div>
<div style="left:1173px;top:640px;width:1px;height:1px;background:#8a94a4;"></div>
<div style="left:1173px;top:644px;width:2px;height:2px;background:#fafbfd;"></div>
<div style="left:1173px;top:644px;width:1px;height:1px;background:#8a94a4;"></div>
<svg style="left:17px;top:603px" width="12" height="17" viewBox="0 0 12 17"><path d="M0.500 0.500h8l3 3v13h-11z" fill="#fff" stroke="#555"/></svg>
<svg style="left:36px;top:603px" width="17" height="17" viewBox="0 0 17 17"><path d="M0.500 4.500h6l1.500 1.500h6v10h-13.500z" fill="#e0b030" stroke="#806010"/><path d="M0.500 15.500l3-7h13l-3 7z" fill="#f4d460" stroke="#806010"/><path d="M10 3c2-3 5-2 5 1" fill="none" stroke="#3060c0" stroke-width="1.300"/></svg>
<svg style="left:58px;top:603px" width="17" height="17" viewBox="0 0 17 17"><path d="M1 5l7-3l8 2v9l-8 3l-7-2z" fill="#d8a850" stroke="#6a4a10"/><path d="M8 6v10M1 5l7 1l8-2" stroke="#6a4a10" fill="none"/><rect x="3" y="8" width="3" height="1.500" fill="#333"/><rect x="3" y="12" width="3" height="1.500" fill="#333"/></svg>
<svg style="left:80px;top:603px" width="17" height="17" viewBox="0 0 17 17"><path d="M1 5l7-3l8 2v9l-8 3l-7-2z" fill="#5078d0" stroke="#203070"/><path d="M8 6v10M1 5l7 1l8-2" stroke="#203070" fill="none"/><rect x="3" y="8" width="3" height="1.500" fill="#eef"/><rect x="3" y="12" width="3" height="1.500" fill="#eef"/></svg>
<svg style="left:103px;top:603px" width="14" height="16" viewBox="0 0 14 16"><rect x="0.500" y="0.500" width="13" height="15" fill="#8886d8" stroke="#5a58a8"/><rect x="2.500" y="1" width="9" height="7" fill="#f0f0f8"/><path d="M3.500 3h7M3.500 5h7" stroke="#aab"/><rect x="3.500" y="10" width="7" height="5" fill="#4a4890"/><rect x="4.500" y="11" width="2" height="3" fill="#ddd"/></svg>
<svg style="left:124px;top:603px" width="16" height="16" viewBox="0 0 16 16"><rect x="0.500" y="2.500" width="15" height="13" fill="#f4ead0" stroke="#666"/><rect x="3" y="0.500" width="4" height="3" fill="#ccc" stroke="#555"/><rect x="9" y="0.500" width="4" height="3" fill="#ccc" stroke="#555"/><path d="M2.500 6h11M2.500 8.500h11M2.500 11h11M2.500 13.500h11" stroke="#665"/></svg>
<svg style="left:146px;top:603px" width="18" height="16" viewBox="0 0 18 16"><path d="M4 1h9l1 6h-11z" fill="#fff" stroke="#778"/><path d="M1 7h16l-1 7h-14z" fill="#e0e4ee" stroke="#667"/><path d="M4 11h10v4h-10z" fill="#fff" stroke="#778"/></svg>
<svg style="left:168px;top:603px" width="17" height="17" viewBox="0 0 17 17"><path d="M0.500 0.500h8l3 3v12h-11z" fill="#fff" stroke="#666"/><path d="M2 5h7M2 7.500h7M2 10h4" stroke="#888"/><circle cx="9.500" cy="9.500" r="3.500" fill="#cfe4ff" stroke="#3060c0" stroke-width="1.500"/><path d="M12 12l4 4" stroke="#3060c0" stroke-width="2"/></svg>
<div style="left:190px;top:603px;width:1px;height:18px;background:#a8b0c0;"></div>
<div style="left:191px;top:603px;width:1px;height:18px;background:#f8f9fc;"></div>
<svg style="left:197px;top:604px" width="18" height="15" viewBox="0 0 18 15"><path d="M1 1v7h7l-2.500-2.500c3-2 8-1 9 4.500h2.500c-1-8-9-10-13.500-6.500z" fill="#b4c0d8" stroke="#8090ac" stroke-width=".8"/><path d="M0.500 13.500h17" stroke="#8090ac" stroke-width="1.500"/></svg>
<svg style="left:220px;top:604px" width="18" height="15" viewBox="0 0 18 15"><path d="M17 1v7h-7l2.500-2.500c-3-2-8-1-9 4.500h-2.500c1-8 9-10 13.500-6.500z" fill="#b4c0d8" stroke="#8090ac" stroke-width=".8"/><path d="M0.500 13.500h17" stroke="#8090ac" stroke-width="1.500"/></svg>
<div style="left:243px;top:603px;width:1px;height:18px;background:#a8b0c0;"></div>
<div style="left:244px;top:603px;width:1px;height:18px;background:#f8f9fc;"></div>
<svg style="left:250px;top:603px" width="17" height="17" viewBox="0 0 17 17"><path d="M1 14l5-12h10l-5 12z" fill="#f8e040" stroke="#222" stroke-width="1.300"/><path d="M9 6l1 8l2-2l2 3l1-1l-2-3h3z" fill="#ddd" stroke="#333" stroke-width=".7"/><circle cx="6" cy="2" r="1.200" fill="#e02020"/><circle cx="1.500" cy="14" r="1.200" fill="#e02020"/><circle cx="11" cy="14" r="1.200" fill="#e02020"/></svg>
<svg style="left:272px;top:603px" width="17" height="17" viewBox="0 0 17 17"><ellipse cx="7.500" cy="6.500" rx="7" ry="5.500" fill="#f8e040" stroke="#333"/><path d="M9 6l1 8l2-2l2 3l1-1l-2-3h3z" fill="#ddd" stroke="#333" stroke-width=".7"/><circle cx="7" cy="1.200" r="1.200" fill="#e02020"/><circle cx="1" cy="7" r="1.200" fill="#e02020"/><circle cx="7.500" cy="6.500" r="1" fill="#e02020"/></svg>
<svg style="left:295px;top:603px" width="17" height="17" viewBox="0 0 17 17"><circle cx="8" cy="8.500" r="6.500" fill="none" stroke="#e8c020" stroke-width="3.500"/><circle cx="8" cy="8.500" r="7.800" fill="none" stroke="#333" stroke-width=".7"/><circle cx="8" cy="8.500" r="4.600" fill="none" stroke="#333" stroke-width=".7"/><circle cx="8" cy="8.500" r="1.200" fill="#e02020"/><circle cx="3" cy="8.500" r="1.200" fill="#e02020"/><path d="M9 8l1 7l2-2l2 3" fill="#ddd" stroke="#333" stroke-width=".7"/></svg>
<svg style="left:316px;top:603px" width="18" height="17" viewBox="0 0 18 17"><rect x="0.500" y="0.500" width="15" height="11" fill="#f8e860" stroke="#333"/><path d="M3 4l1 9l2-2l2 4l1.500-1l-2-3.500h3z" fill="#ddd" stroke="#333" stroke-width=".7"/><path d="M10 4h4M12 2v4M10 8h4" stroke="#333" stroke-width="1.200"/></svg>
<svg style="left:338px;top:603px" width="17" height="17" viewBox="0 0 17 17"><rect x="0.500" y="5.500" width="11" height="11" fill="#f8e860" stroke="#555"/><rect x="7.500" y="0.500" width="9" height="8" fill="#fff" stroke="#334"/><rect x="7.500" y="0.500" width="9" height="2.500" fill="#2a3a90"/></svg>
<div style="left:360px;top:603px;width:1px;height:18px;background:#a8b0c0;"></div>
<div style="left:361px;top:603px;width:1px;height:18px;background:#f8f9fc;"></div>
<div style="left:365px;top:600px;width:21px;height:23px;background:linear-gradient(#ffe8b0,#ffc860);border:1px solid #d8a040;border-radius:2px;"></div>
<svg style="left:369px;top:603px" width="13" height="17" viewBox="0 0 13 17"><rect x="0.500" y="0.500" width="12" height="16" fill="#fff" stroke="#222"/><path d="M2 3.500h1.500M5 3.500h6M2 6.500h1.500M5 6.500h6M2 9.500h1.500M5 9.500h6M2 12.500h1.500M5 12.500h6" stroke="#222"/></svg>
<svg style="left:390px;top:603px" width="17" height="16" viewBox="0 0 17 16"><rect x="0.500" y="0.500" width="16" height="15" fill="#fff" stroke="#444"/><rect x="0.500" y="0.500" width="16" height="3" fill="#556"/><path d="M0 6.500h17M0 9.500h17M0 12.500h17M5.500 3v13M11 3v13" stroke="#666"/></svg>
<div style="left:412px;top:603px;width:1px;height:18px;background:#a8b0c0;"></div>
<div style="left:413px;top:603px;width:1px;height:18px;background:#f8f9fc;"></div>
<svg style="left:419px;top:603px" width="16" height="17" viewBox="0 0 16 17"><path d="M5 0l1.200 3l3-1l-2 2.500l2 2.500l-3-1l-1.200 3l-1.200-3l-3 1l2-2.500l-2-2.500l3 1z" fill="#f8e020" stroke="#a08000" stroke-width=".5"/><path d="M12 6v7M9.500 10.500l2.500 3l2.500-3" stroke="#2050c0" stroke-width="1.500" fill="none"/><path d="M2 15.500h13" stroke="#222" stroke-width="1.300"/></svg>
<div style="left:440px;top:601px;width:216px;height:21px;background:#fff;"></div>
<span class="t" style="left:445px;top:606px;font-size:12.3px;letter-spacing:-1.188px;">LC2</span>
<div style="left:646px;top:602px;width:10px;height:19px;background:#e4e8f0;"></div>
<svg style="left:648px;top:609px" width="7" height="4"><path d="M0 0h7l-3.500 4z" fill="#6a7080"/></svg>
<svg style="left:666px;top:606px" width="9" height="12"><path d="M8.500 0.500v11l-8-5.500z" fill="#3a6af0" stroke="#2040b0" stroke-width=".7"/></svg>
<svg style="left:687px;top:606px" width="9" height="12"><path d="M0.500 0.500v11l8-5.500z" fill="#3a6af0" stroke="#2040b0" stroke-width=".7"/></svg>
<div style="left:704px;top:600px;width:22px;height:23px;background:linear-gradient(#ffe8b0,#ffc860);border:1px solid #d8a040;border-radius:2px;"></div>
<div style="left:726px;top:600px;width:22px;height:23px;background:linear-gradient(#ffe8b0,#ffc860);border:1px solid #d8a040;border-radius:2px;"></div>
<svg style="left:708px;top:603px" width="16" height="17" viewBox="0 0 16 17"><circle cx="9" cy="5" r="4.500" fill="none" stroke="#223a90" stroke-width="1.500"/><circle cx="9" cy="5" r="2" fill="#2a50d0"/><path d="M4 4v9M2 10.500l2 3l2-3" stroke="#223a90" stroke-width="1.300" fill="none"/><path d="M0 15.500h15" stroke="#222" stroke-width="1.300"/></svg>
<svg style="left:729px;top:602px" width="17" height="18" viewBox="0 0 17 18"><path d="M8 7v7M5.500 11.500l2.500 3l2.500-3" stroke="#223a90" stroke-width="1.300" fill="none"/><path d="M1 16.500h15" stroke="#222" stroke-width="1.300"/></svg>
<span class="t" style="left:729px;top:601px;font-size:8px;font-family:'Liberation Serif',serif;font-weight:bold;">X.XX</span>
<svg style="left:750px;top:603px" width="18" height="17" viewBox="0 0 18 17"><path d="M1 6c4-5 11-5 15 0c-4 5-11 5-15 0z" fill="#fff" stroke="#222"/><circle cx="8.500" cy="6" r="3" fill="#2a50d0"/><path d="M0 15l17-4v4z" fill="#d02020"/><path d="M0 15l17-4" stroke="#2040c0" stroke-width="1.500"/></svg>
<svg style="left:772px;top:603px" width="18" height="17" viewBox="0 0 18 17"><path d="M0 13l17-3v3z" fill="#e0a0a0"/><path d="M0 13l17-3" stroke="#8090d0" stroke-width="1.500"/></svg>
<span class="t" style="left:773px;top:601px;font-size:8px;font-family:'Liberation Serif',serif;color:#9a9aa8;">X.XX</span>
<div style="left:795px;top:603px;width:1px;height:18px;background:#a8b0c0;"></div>
<div style="left:796px;top:603px;width:1px;height:18px;background:#f8f9fc;"></div>
<svg style="left:802px;top:605px" width="16" height="13" viewBox="0 0 16 13"><circle cx="3.500" cy="8" r="3" fill="none" stroke="#3a5ab0" stroke-width="1.500"/><circle cx="11.500" cy="8" r="3" fill="none" stroke="#3a5ab0" stroke-width="1.500"/><path d="M3 5l2-4M12 5l2-4M6.500 8h2" stroke="#3a5ab0" stroke-width="1.300"/></svg>
<svg style="left:823px;top:603px" width="18" height="17" viewBox="0 0 18 17"><rect x="7.500" y="0.500" width="10" height="7" fill="#fff" stroke="#334"/><rect x="7.500" y="0.500" width="10" height="2.500" fill="#2a3a90"/><path d="M1 5v11M16 8v8M1 10h15" stroke="#222" stroke-width="1.300"/><circle cx="4" cy="13" r="1.800" fill="#e8c020" stroke="#223a90"/><circle cx="8.500" cy="13" r="1.800" fill="#e8c020" stroke="#223a90"/><circle cx="13" cy="13" r="1.800" fill="#e8c020" stroke="#223a90"/></svg>
<svg style="left:846px;top:605px" width="18" height="15" viewBox="0 0 18 15"><path d="M1 1v13M16 1v13M1 6h15" stroke="#222" stroke-width="1.300"/><circle cx="4" cy="3" r="1.600" fill="#3050c0"/><circle cx="8.500" cy="3" r="1.600" fill="#3050c0"/><circle cx="13" cy="3" r="1.600" fill="#3050c0"/><circle cx="4" cy="10" r="1.800" fill="#e8c020" stroke="#223a90"/><circle cx="8.500" cy="10" r="1.800" fill="#e8c020" stroke="#223a90"/><circle cx="13" cy="10" r="1.800" fill="#e8c020" stroke="#223a90"/></svg>
<svg style="left:880px;top:603px" width="18" height="17" viewBox="0 0 18 17"><path d="M1 6l6-3l6 1l4 3l-3 2l-8 1z" fill="#c8a888" stroke="#5a4030" stroke-width=".8"/><path d="M2 11h14M2 13.500h14M2 16h14" stroke="#222" stroke-dasharray="1.500 1.500"/></svg>
<svg style="left:902px;top:603px" width="17" height="17" viewBox="0 0 17 17"><path d="M8.500 0v17M0 8.500h17" stroke="#2030c0" stroke-width="1.200"/><circle cx="8.500" cy="8.500" r="3" fill="none" stroke="#2030c0"/><path d="M2 2h13v13h-13z" fill="none" stroke="#222" stroke-dasharray="1.500 1.500"/></svg>
<svg style="left:925px;top:603px" width="17" height="17" viewBox="0 0 17 17"><path d="M2 5l9-3v10l-9 3z" fill="#5078e0" stroke="#1a2a80" stroke-width=".8"/><path d="M5 6h11v7h-11z" fill="#e03030" stroke="#800" stroke-width=".8" opacity=".9"/><path d="M8.500 0v17M0 9h17" stroke="#1a2a80" stroke-width="1"/></svg>
<svg style="left:946px;top:603px" width="17" height="17" viewBox="0 0 17 17"><path d="M2 5l9-3v10l-9 3z" fill="#5078e0" stroke="#1a2a80" stroke-width=".8"/><path d="M5 6h11v7h-11z" fill="#e03030" stroke="#800" stroke-width=".8" opacity=".9"/><path d="M8.500 0v17M0 9h17" stroke="#1a2a80" stroke-width="1"/></svg>
<div style="left:965px;top:600px;width:22px;height:23px;background:linear-gradient(#ffe8b0,#ffc860);border:1px solid #d8a040;border-radius:2px;"></div>
<svg style="left:968px;top:603px" width="17" height="17" viewBox="0 0 17 17"><path d="M2 5l9-3v10l-9 3z" fill="#5078e0" stroke="#1a2a80" stroke-width=".8"/><path d="M5 6h11v7h-11z" fill="#e03030" stroke="#800" stroke-width=".8" opacity=".9"/><path d="M8.500 0v17M0 9h17" stroke="#1a2a80" stroke-width="1"/></svg>
<svg style="left:990px;top:603px" width="16" height="17" viewBox="0 0 16 17"><path d="M1 15l3-12h8l3 12z" fill="#dfe6f4" stroke="#6a80b0"/><path d="M2.500 9h11M3.500 5h9M6 3l-1.500 12M10 3l1.500 12" stroke="#6a80b0"/><circle cx="6" cy="9" r="1.200" fill="#e02020"/><circle cx="10.500" cy="5" r="1.200" fill="#e02020"/><circle cx="11" cy="12" r="1.200" fill="#e02020"/></svg>
<svg style="left:1012px;top:603px" width="18" height="17" viewBox="0 0 18 17"><rect x="7.500" y="0.500" width="10" height="7" fill="#fff" stroke="#334"/><rect x="7.500" y="0.500" width="10" height="2.500" fill="#2a3a90"/><path d="M2 14l5-8l4 3" fill="none" stroke="#3a5ab0" stroke-width="1.500"/><circle cx="2.500" cy="14" r="2" fill="#dfe6f4" stroke="#3a5ab0"/><circle cx="7" cy="6" r="2" fill="#dfe6f4" stroke="#3a5ab0"/></svg>
<div style="left:1035px;top:603px;width:1px;height:18px;background:#a8b0c0;"></div>
<div style="left:1036px;top:603px;width:1px;height:18px;background:#f8f9fc;"></div>
<svg style="left:1042px;top:603px" width="17" height="17" viewBox="0 0 17 17"><circle cx="3" cy="3" r="2.300" fill="#fff" stroke="#222"/><circle cx="13" cy="13" r="3" fill="#fff" stroke="#222"/><path d="M5 4l6 4M8 9l3-1l-1-3" stroke="#222" fill="none" stroke-width="1.200"/></svg>
<svg style="left:1064px;top:603px" width="17" height="17" viewBox="0 0 17 17"><ellipse cx="8.500" cy="9" rx="7" ry="4" fill="none" stroke="#3a5ac0" stroke-width="1.500"/><path d="M8.500 0v17" stroke="#e02020" stroke-dasharray="2 1.500" stroke-width="1.200"/></svg>
<svg style="left:1085px;top:603px" width="17" height="17" viewBox="0 0 17 17"><path d="M1 15l6-12v12zM16 15l-6-12v12z" fill="#eef" stroke="#222"/><path d="M8.500 0v17" stroke="#e02020" stroke-dasharray="2 1.500" stroke-width="1.200"/></svg>
<svg style="left:1107px;top:603px" width="17" height="17" viewBox="0 0 17 17"><path d="M2 2l13 13M15 2l-13 13" stroke="#e02020" stroke-width="1.500"/><circle cx="8.500" cy="8.500" r="3" fill="#e8ecf4" stroke="#222"/><rect x="0.500" y="0.500" width="3" height="3" fill="#e02020"/><rect x="13.500" y="0.500" width="3" height="3" fill="#e02020"/><rect x="0.500" y="13.500" width="3" height="3" fill="#e02020"/><rect x="13.500" y="13.500" width="3" height="3" fill="#e02020"/></svg>
<svg style="left:1129px;top:603px" width="17" height="17" viewBox="0 0 17 17"><rect x="8.500" y="0.500" width="8" height="6" fill="#fff" stroke="#334"/><rect x="8.500" y="0.500" width="8" height="2" fill="#2a3a90"/><circle cx="7" cy="10" r="6.500" fill="#1a1a80"/></svg>
<span class="t" style="left:1134px;top:607px;font-size:11px;font-weight:bold;color:#fff;font-family:'Liberation Serif',serif;">i</span>
<svg style="left:1151px;top:603px" width="17" height="17" viewBox="0 0 17 17"><rect x="0.500" y="2.500" width="16" height="14" fill="#ecd8b8" stroke="#554"/><rect x="2" y="0.500" width="5" height="3" fill="#ccc" stroke="#555"/><rect x="10" y="0.500" width="5" height="3" fill="#ccc" stroke="#555"/><circle cx="8.500" cy="9.500" r="4.500" fill="#3a5ac0" stroke="#1a2a80" stroke-width="2" stroke-dasharray="2 1.300"/><circle cx="8.500" cy="9.500" r="1.800" fill="#fff"/></svg>
<svg style="left:1183px;top:603px" width="18" height="17" viewBox="0 0 18 17"><rect x="4" y="0.500" width="13" height="12" fill="#1a4aa8"/><path d="M6 2l9 9M15 2l-9 9" stroke="#6ab0f0" stroke-width="1.500"/><rect x="9" y="4" width="3" height="4" fill="#fff"/><path d="M0 10h9l-4.500 6.500z" fill="#e82020"/></svg>
<svg style="left:1203px;top:613px" width="6" height="7"><path d="M6 0v7h-6z" fill="#e82020"/></svg>
<svg style="left:15px;top:630px" width="12" height="12" viewBox="0 0 12 12"><path d="M5 0l1.200 3l3-1l-2 2.500l2 2.500l-3-1l-1.200 3l-1.200-3l-3 1l2-2.500l-2-2.500l3 1z" fill="#f8e020" stroke="#a08000" stroke-width=".5"/><rect x="7" y="7" width="4" height="4" fill="#e02020"/></svg>
<svg style="left:37px;top:637px" width="6" height="4"><path d="M0 0h6l-3 3.500z" fill="#6a7080"/></svg>
<svg style="left:48px;top:629px" width="17" height="17" viewBox="0 0 17 17"><path d="M5 0l1.200 3l3-1l-2 2.500l2 2.500l-3-1l-1.200 3l-1.200-3l-3 1l2-2.500l-2-2.500l3 1z" fill="#f8e020" stroke="#a08000" stroke-width=".5"/><path d="M3 15l12-13" stroke="#222" stroke-width="1.300"/><rect x="0.500" y="13" width="3" height="3" fill="#e02020"/><rect x="13.500" y="0.500" width="3" height="3" fill="#e02020"/></svg>
<svg style="left:73px;top:629px" width="17" height="17" viewBox="0 0 17 17"><path d="M5 0l1.200 3l3-1l-2 2.500l2 2.500l-3-1l-1.200 3l-1.200-3l-3 1l2-2.500l-2-2.500l3 1z" fill="#f8e020" stroke="#a08000" stroke-width=".5"/><path d="M2 15l12-13" stroke="#7a98d8" stroke-width="3"/><path d="M2 15l12-13" stroke="#dfe8fa" stroke-width="1"/><rect x="0.500" y="13.500" width="3" height="3" fill="#e02020"/><path d="M11 10h4M13 10v6M11 16h4" stroke="#3050b0" stroke-width="1.200"/></svg>
<svg style="left:94px;top:637px" width="6" height="4"><path d="M0 0h6l-3 3.500z" fill="#6a7080"/></svg>
<svg style="left:108px;top:629px" width="17" height="17" viewBox="0 0 17 17"><path d="M5 0l1.200 3l3-1l-2 2.500l2 2.500l-3-1l-1.200 3l-1.200-3l-3 1l2-2.500l-2-2.500l3 1z" fill="#f8e020" stroke="#a08000" stroke-width=".5"/><path d="M8 2h6v7l-6 6" fill="none" stroke="#222" stroke-width="1.300"/><rect x="12.500" y="0.500" width="3" height="3" fill="#e02020"/><rect x="12.500" y="7.500" width="3" height="3" fill="#e02020"/><rect x="6.500" y="13.500" width="3" height="3" fill="#e02020"/><rect x="6.500" y="0.500" width="3" height="3" fill="#e02020"/></svg>
<svg style="left:130px;top:637px" width="6" height="4"><path d="M0 0h6l-3 3.500z" fill="#6a7080"/></svg>
<div style="left:141px;top:629px;width:1px;height:18px;background:#a8b0c0;"></div>
<div style="left:142px;top:629px;width:1px;height:18px;background:#f8f9fc;"></div>
<svg style="left:150px;top:628px" width="16" height="18" viewBox="0 0 16 18"><path d="M5 0l1.200 3l3-1l-2 2.500l2 2.500l-3-1l-1.200 3l-1.200-3l-3 1l2-2.500l-2-2.500l3 1z" fill="#f8e020" stroke="#a08000" stroke-width=".5"/><rect x="6.500" y="0.500" width="3" height="3" fill="#e02020"/><circle cx="9" cy="8" r="3" fill="#30a848"/><path d="M3 17c0-5 3-7 6-7s6 2 6 7z" fill="#30a848" stroke="#186028" stroke-width=".6"/></svg>
<svg style="left:171px;top:629px" width="18" height="17" viewBox="0 0 18 17"><path d="M5 0l1.200 3l3-1l-2 2.500l2 2.500l-3-1l-1.200 3l-1.200-3l-3 1l2-2.500l-2-2.500l3 1z" fill="#f8e020" stroke="#a08000" stroke-width=".5"/><path d="M3 9h14" stroke="#222" stroke-width="1.300"/><rect x="2" y="7.500" width="3" height="3" fill="#e02020"/><rect x="14" y="7.500" width="3" height="3" fill="#e02020"/><path d="M5 11l-3 5h6zM14 11l-3 5h6z" fill="#30a848" stroke="#186028" stroke-width=".6"/></svg>
<svg style="left:194px;top:629px" width="17" height="17" viewBox="0 0 17 17"><path d="M5 0l1.200 3l3-1l-2 2.500l2 2.500l-3-1l-1.200 3l-1.200-3l-3 1l2-2.500l-2-2.500l3 1z" fill="#f4eca0"/><path d="M2 11l6-5l8 4l-6 5z" fill="#9ccae8" stroke="#6a9ac0" stroke-width=".7"/><path d="M2 11v2l8 4v-2zM10 15l6-5v2l-6 5z" fill="#58b878"/></svg>
<div style="left:216px;top:629px;width:1px;height:18px;background:#a8b0c0;"></div>
<div style="left:217px;top:629px;width:1px;height:18px;background:#f8f9fc;"></div>
<svg style="left:225px;top:629px" width="19" height="17" viewBox="0 0 19 17"><path d="M5 0l1.200 3l3-1l-2 2.500l2 2.500l-3-1l-1.200 3l-1.200-3l-3 1l2-2.500l-2-2.500l3 1z" fill="#f8e020" stroke="#a08000" stroke-width=".5"/><path d="M2 6v11M17 6v11M2 12h15" stroke="#222" stroke-width="1.300"/><path d="M7 3l4 5M11 3l-4 5" stroke="#222" stroke-width="1.300"/></svg>
<svg style="left:247px;top:637px" width="6" height="4"><path d="M0 0h6l-3 3.500z" fill="#6a7080"/></svg>
<svg style="left:257px;top:629px" width="18" height="17" viewBox="0 0 18 17"><path d="M5 0l1.200 3l3-1l-2 2.500l2 2.500l-3-1l-1.200 3l-1.200-3l-3 1l2-2.500l-2-2.500l3 1z" fill="#f8e020" stroke="#a08000" stroke-width=".5"/><path d="M1 15l8-6h8M1 15v-4M1 15h4" stroke="#222" stroke-width="1.200" fill="none"/></svg>
<span class="t" style="left:267px;top:628px;font-size:6.5px;font-family:'Liberation Serif',serif;">XX</span>
<svg style="left:280px;top:629px" width="17" height="17" viewBox="0 0 17 17"><path d="M5 0l1.200 3l3-1l-2 2.500l2 2.500l-3-1l-1.200 3l-1.200-3l-3 1l2-2.500l-2-2.500l3 1z" fill="#f8e020" stroke="#a08000" stroke-width=".5"/><rect x="3.500" y="3.500" width="11" height="11" fill="none" stroke="#222" stroke-dasharray="1.500 1.500"/><path d="M3.500 0v17M14.500 3v14M0 14.500h17M3 3.500h14" stroke="#222" stroke-width=".8" stroke-dasharray="1.500 1.500"/></svg>
<div style="left:302px;top:629px;width:1px;height:18px;background:#a8b0c0;"></div>
<div style="left:303px;top:629px;width:1px;height:18px;background:#f8f9fc;"></div>
<svg style="left:311px;top:629px" width="17" height="17" viewBox="0 0 17 17"><path d="M5 0l1.200 3l3-1l-2 2.500l2 2.500l-3-1l-1.200 3l-1.200-3l-3 1l2-2.500l-2-2.500l3 1z" fill="#f8e020" stroke="#a08000" stroke-width=".5"/><rect x="4.500" y="6.500" width="11" height="8" fill="#9cc0f0" stroke="#3a5a90"/><rect x="13" y="12" width="4" height="4" fill="#e02020"/></svg>
<svg style="left:334px;top:637px" width="6" height="4"><path d="M0 0h6l-3 3.500z" fill="#6a7080"/></svg>
<svg style="left:346px;top:629px" width="17" height="17" viewBox="0 0 17 17"><path d="M5 0l1.200 3l3-1l-2 2.500l2 2.500l-3-1l-1.200 3l-1.200-3l-3 1l2-2.500l-2-2.500l3 1z" fill="#f8e020" stroke="#a08000" stroke-width=".5"/><rect x="2.500" y="3.500" width="13" height="13" fill="#b8d0f4" stroke="#2a4a90"/><path d="M8 2l1 10l2-2l2 4l1.500-1l-2-4h3z" fill="#eee" stroke="#333" stroke-width=".7"/><path d="M4 15h10" stroke="#e02020" stroke-width="2" stroke-dasharray="2 1.500"/></svg>
<svg style="left:368px;top:637px" width="6" height="4"><path d="M0 0h6l-3 3.500z" fill="#6a7080"/></svg>
<svg style="left:381px;top:629px" width="17" height="17" viewBox="0 0 17 17"><path d="M1 5l7 2l8-4v9l-8 4l-7-2z" fill="#a8c0e8" stroke="#3a5a90"/><path d="M8 7v9" stroke="#3a5a90"/><path d="M3 15v-7M8 16v-7M14 12v-8" stroke="#e02020" stroke-width="1.500"/><path d="M14 1l-2 4h4z" fill="#222"/><circle cx="3" cy="15" r="1.300" fill="#e02020"/><circle cx="8" cy="16" r="1.300" fill="#e02020"/></svg>
<svg style="left:402px;top:637px" width="6" height="4"><path d="M0 0h6l-3 3.500z" fill="#6a7080"/></svg>
<svg style="left:415px;top:629px" width="16" height="16" viewBox="0 0 16 16"><path d="M3 0.500h12v11l-3 4h-11.500v-11z" fill="#dfe6f2" stroke="#8a96ac"/><rect x="7.500" y="0.500" width="8" height="6" fill="#fff" stroke="#556"/><rect x="7.500" y="0.500" width="8" height="2" fill="#556a90"/><path d="M0.500 4.500h11.500v11" fill="none" stroke="#8a96ac"/></svg>
<svg style="left:437px;top:629px" width="18" height="17" viewBox="0 0 18 17"><path d="M5 0l1.200 3l3-1l-2 2.500l2 2.500l-3-1l-1.200 3l-1.200-3l-3 1l2-2.500l-2-2.500l3 1z" fill="#f8e020" stroke="#a08000" stroke-width=".5"/><rect x="9.500" y="1.500" width="7" height="7" fill="#fff" stroke="#445"/><rect x="7.500" y="3.500" width="7" height="7" fill="#fff" stroke="#445"/><rect x="2.500" y="7.500" width="11" height="8" fill="#9cc0f0" stroke="#3a5a90"/><rect x="12" y="13" width="4" height="4" fill="#e02020"/></svg>
<svg style="left:457px;top:637px" width="6" height="4"><path d="M0 0h6l-3 3.500z" fill="#6a7080"/></svg>
<svg style="left:477px;top:629px" width="19" height="17" viewBox="0 0 19 17"><path d="M1 6l6-3l6 1l3 3l-3 2l-8 1z" fill="#c8a888" stroke="#5a4030" stroke-width=".8"/><circle cx="11" cy="12" r="4" fill="#ccc" stroke="#444" stroke-width="1.300"/><path d="M14 2v8M11 5h7" stroke="#222"/></svg>
<svg style="left:501px;top:629px" width="18" height="17" viewBox="0 0 18 17"><circle cx="7" cy="7" r="5.500" fill="#e0ecfc" stroke="#2a50b0" stroke-width="1.800"/><path d="M11 11l5.500 5.500" stroke="#2a50b0" stroke-width="2.500"/><rect x="6.500" y="1.500" width="8" height="7" fill="none" stroke="#222"/><circle cx="14.500" cy="1.500" r="1.300" fill="#e02020"/></svg>
<svg style="left:523px;top:629px" width="18" height="17" viewBox="0 0 18 17"><circle cx="7" cy="7" r="5.500" fill="#e0ecfc" stroke="#2a50b0" stroke-width="1.800"/><path d="M11 11l5.500 5.500" stroke="#2a50b0" stroke-width="2.500"/><path d="M8 1l8 8M16 1l-8 8" stroke="#e02020" stroke-width="1.800"/></svg>
<svg style="left:545px;top:629px" width="17" height="17" viewBox="0 0 17 17"><path d="M1 4c4-3 11-3 15 0v10c-4 3-11 3-15 0z" fill="#e8eef8" stroke="#4a5a80"/><rect x="4.500" y="4.500" width="8" height="9" fill="none" stroke="#4a5a80"/><path d="M1 4l3.500 .5M16 4l-3.500 .5M1 14l3.500-.5M16 14l-3.500-.5" stroke="#4a5a80"/></svg>
<svg style="left:566px;top:629px" width="18" height="17" viewBox="0 0 18 17"><path d="M6 4h6v6h-6z M9 1h6v6" fill="#e8eef8" stroke="#5a6a90"/><path d="M1 9h7v7h-7z" fill="#e8eef8" stroke="#5a6a90"/><path d="M1 9l3-3h7l-3 3M8 16l3-3v-7" fill="#d0d8ea" stroke="#5a6a90"/></svg>
<svg style="left:586px;top:629px" width="28" height="18" viewBox="586 629 28 18"><path d="M600 634H609" stroke="#30c848" stroke-width="1.800"/><path d="M612 634l-4.5 -2.800v5.600z" fill="#30c848"/><path d="M600 634V642" stroke="#3068e8" stroke-width="1.800"/><path d="M600 646l-2.800 -4.500h5.600z" fill="#3068e8"/><path d="M600 634" /></svg>
<span class="t" style="left:604.5px;top:636.5px;font-size:10.5px;font-family:'Liberation Serif',serif;color:#222;">X</span>
<svg style="left:618px;top:629px" width="28" height="18" viewBox="618 629 28 18"><path d="M632 634H623" stroke="#e83030" stroke-width="1.800"/><path d="M620 634l4.5 -2.800v5.600z" fill="#e83030"/><path d="M632 634V642" stroke="#3068e8" stroke-width="1.800"/><path d="M632 646l-2.800 -4.500h5.600z" fill="#3068e8"/><path d="M632 634" /></svg>
<span class="t" style="left:621.5px;top:636.5px;font-size:10.5px;font-family:'Liberation Serif',serif;color:#222;">Y</span>
<svg style="left:630px;top:629px" width="28" height="18" viewBox="630 629 28 18"><path d="M644 634H653" stroke="#e83030" stroke-width="1.800"/><path d="M656 634l-4.5 -2.800v5.600z" fill="#e83030"/><path d="M644 634V642" stroke="#30c848" stroke-width="1.800"/><path d="M644 646l-2.800 -4.500h5.600z" fill="#30c848"/><path d="M644 634" /></svg>
<span class="t" style="left:648.5px;top:636.5px;font-size:10.5px;font-family:'Liberation Serif',serif;color:#222;">Z</span>
<svg style="left:663.5px;top:629px" width="28" height="18" viewBox="663.5 629 28 18"><path d="M677.5 634H668.5" stroke="#30c848" stroke-width="1.800"/><path d="M665.5 634l4.5 -2.800v5.600z" fill="#30c848"/><path d="M677.5 634V642" stroke="#3068e8" stroke-width="1.800"/><path d="M677.5 646l-2.800 -4.500h5.600z" fill="#3068e8"/><path d="M677.5 634" /></svg>
<span class="t" style="left:664.5px;top:636.5px;font-size:10.5px;font-family:'Liberation Serif',serif;color:#222;">-X</span>
<svg style="left:675px;top:630px" width="8" height="7" viewBox="0 0 8 7"><circle cx="4" cy="3.500" r="3" fill="#c02020"/></svg>
<svg style="left:686px;top:637px" width="6" height="4"><path d="M0 0h6l-3 3.500z" fill="#6a7080"/></svg>
<svg style="left:699px;top:629px" width="19" height="17" viewBox="0 0 19 17"><rect x="0.500" y="0.500" width="8" height="8" fill="#f8e860" stroke="#665"/><path d="M8 7l7-6l2 2l-6 7z" fill="#333"/><path d="M5 15.500h12M11 9v6M8 12c0-3 6-3 6 0" stroke="#222" stroke-width="1.600" fill="none"/></svg>
<svg style="left:722px;top:637px" width="6" height="4"><path d="M0 0h6l-3 3.500z" fill="#6a7080"/></svg>
<div style="left:733px;top:629px;width:1px;height:18px;background:#a8b0c0;"></div>
<div style="left:734px;top:629px;width:1px;height:18px;background:#f8f9fc;"></div>
<svg style="left:743px;top:629px" width="17" height="17" viewBox="0 0 17 17"><path d="M1 5l5-3h6l4 3v7l-5 4h-7l-3-3z" fill="#8ca0c8" stroke="#44587c"/><path d="M6 6h5v4h-5z" fill="#dfe6f4" stroke="#44587c"/><path d="M1 5l5 1M16 5l-5 1M4 16l2-6" stroke="#44587c" fill="none"/></svg>
<svg style="left:765px;top:637px" width="6" height="4"><path d="M0 0h6l-3 3.500z" fill="#6a7080"/></svg>
<svg style="left:787px;top:629px" width="18" height="17" viewBox="0 0 18 17"><path d="M2 15l3-12l9-1l2 12" fill="none" stroke="#8a96a8" stroke-width="1.500"/><circle cx="5" cy="3" r="1.500" fill="#e03030"/><circle cx="14" cy="2" r="1.500" fill="#e03030"/><rect x="0.500" y="13.500" width="3" height="3" fill="#30a848"/><rect x="14.500" y="12.500" width="3" height="3" fill="#30a848"/></svg>
<svg style="left:809px;top:632px" width="18" height="11" viewBox="0 0 18 11"><rect x="3.500" y="2.500" width="13" height="6" rx="3" fill="#d0d4dc" stroke="#9aa2b0"/><path d="M0 5.500h8" stroke="#8a92a0" stroke-width="2"/><circle cx="11" cy="5.500" r="1.300" fill="#e05050"/></svg>
<div style="left:832px;top:629px;width:1px;height:18px;background:#a8b0c0;"></div>
<div style="left:833px;top:629px;width:1px;height:18px;background:#f8f9fc;"></div>
<svg style="left:840px;top:629px" width="17" height="17" viewBox="0 0 17 17"><path d="M5 2h8M9 2v8" stroke="#5a80d0" stroke-width="1.500"/><path d="M0 16l17-6v2z" fill="#e04040"/><path d="M0 15l17-5" stroke="#3a5ab0" stroke-width="1.300"/></svg>
<svg style="left:862px;top:631px" width="18" height="13" viewBox="0 0 18 13"><path d="M1 7l8-6l8 5l-8 6z" fill="#40b0e0"/><path d="M4 7l5-4l5 3.500l-5 4z" fill="#60d060"/><path d="M6.500 7l2.500-2l2.500 1.800l-2.500 2z" fill="#f0d030"/><path d="M1 7l8 5l8-6v1.500l-8 6l-8-5z" fill="#e04030"/></svg>
<svg style="left:884px;top:629px" width="17" height="17" viewBox="0 0 17 17"><path d="M1 4l8-3l7 3v9l-7 3.500l-8-3.500z" fill="#40a0d8" stroke="#246" stroke-width=".7"/><circle cx="8" cy="10" r="4" fill="#60d060"/><circle cx="8" cy="10" r="2.300" fill="#f0d030"/><circle cx="8" cy="10" r="1" fill="#e03030"/><path d="M1 4l8 3l7-3" stroke="#246" stroke-width=".7" fill="none"/></svg>
<svg style="left:907px;top:629px" width="17" height="17" viewBox="0 0 17 17"><circle cx="6" cy="4" r="2.500" fill="#88c898"/><path d="M2 10c0-3 8-3 8 0z" fill="#88c898"/><path d="M6 17v-5M3.500 13.500l2.500-3l2.500 3" stroke="#58b070" stroke-width="1.500" fill="none"/><path d="M16 5h-5M13 2.500l-3 2.500l3 2.500" stroke="#58b070" stroke-width="1.500" fill="none"/></svg>
<svg style="left:928px;top:631px" width="18" height="14" viewBox="0 0 18 14"><path d="M1 10l14-8c2 0 2 2 1 3l-12 7z" fill="#b8c4dc" stroke="#7a88a8" stroke-width=".7"/><path d="M0 14l17-5v3z" fill="#e04040"/><path d="M0 13l17-4" stroke="#3a5ab0" stroke-width="1.200"/></svg>
<svg style="left:951px;top:630px" width="18" height="15" viewBox="0 0 18 15"><rect x="0.500" y="0.500" width="7" height="5.500" rx="1.500" fill="#f4e470" stroke="#7a6a10"/><rect x="10.500" y="0.500" width="7" height="5.500" rx="1.500" fill="#f4e470" stroke="#7a6a10"/><rect x="0.500" y="9" width="7" height="5.500" rx="1.500" fill="#f4e470" stroke="#7a6a10"/><rect x="10.500" y="9" width="7" height="5.500" rx="1.500" fill="#f4e470" stroke="#7a6a10"/></svg>
<svg style="left:974px;top:637px" width="6" height="4"><path d="M0 0h6l-3 3.500z" fill="#6a7080"/></svg>
<svg style="left:986px;top:629px" width="17" height="17" viewBox="0 0 17 17"><path d="M5 2h8M9 2v8" stroke="#5a80d0" stroke-width="1.500"/><path d="M0 13h17" stroke="#889" stroke-width="1"/><path d="M0 13c3-6 6-6 8.500 0s5.500 6 8.500 0" stroke="#d03030" stroke-width="1.300" fill="none"/></svg>
<svg style="left:1007px;top:629px" width="17" height="17" viewBox="0 0 17 17"><rect x="0.500" y="0.500" width="16" height="16" fill="#e8ecf6" stroke="#a0a8bc"/><path d="M0 4.500h17M0 8.500h17M0 12.500h17M8.500 0v17" stroke="#a0a8bc"/><path d="M2 2.500h5M10 6.500h5M2 10.500h5M10 14.500h5" stroke="#d06060" stroke-width="1.500"/><path d="M10 2.500h5M2 6.500h5" stroke="#6080d0" stroke-width="1.500"/></svg>
<div style="left:1030px;top:629px;width:1px;height:18px;background:#a8b0c0;"></div>
<div style="left:1031px;top:629px;width:1px;height:18px;background:#f8f9fc;"></div>
<svg style="left:1037px;top:629px" width="16" height="17" viewBox="0 0 16 17"><rect x="2.500" y="0.500" width="13" height="16" fill="#f8f8fa" stroke="#889"/><path d="M5 3.500h8M5 6.500h8M5 9.500h8M5 12.500h8" stroke="#999"/><rect x="0.500" y="3" width="4" height="11" fill="#e0e4ec" stroke="#889"/><path d="M1 5h3" stroke="#e03030" stroke-width="1.500"/><path d="M1 8h3" stroke="#e8c020" stroke-width="1.500"/><path d="M1 11h3" stroke="#30a848" stroke-width="1.500"/></svg>
<svg style="left:1060px;top:628px" width="19" height="18" viewBox="0 0 19 18"><path d="M5 0l1.200 3l3-1l-2 2.500l2 2.500l-3-1l-1.200 3l-1.200-3l-3 1l2-2.500l-2-2.500l3 1z" fill="#f8e020" stroke="#a08000" stroke-width=".5"/><path d="M6 15l9-9l2 2l-9 9z" fill="#334" stroke="#111" stroke-width=".5"/><path d="M4 17l2-2l2 2z" fill="#3050c0"/><path d="M13 2l3 3M16 1l-2 5" stroke="#e03030" stroke-width="1.200"/></svg>
<svg style="left:1083px;top:637px" width="6" height="4"><path d="M0 0h6l-3 3.500z" fill="#6a7080"/></svg>
<svg style="left:1095px;top:629px" width="18" height="17" viewBox="0 0 18 17"><path d="M0 0h4l14 14v3h-18z" fill="#223"/><path d="M0 3l14 14" stroke="#e03030" stroke-width="2.500"/><path d="M0 7l10 10" stroke="#f0d020" stroke-width="2.500"/><path d="M0 11l6 6" stroke="#30b040" stroke-width="2.500"/><path d="M0 15l2 2" stroke="#3060d0" stroke-width="2.500"/><path d="M8 10l8-9l2 2l-8 9z" fill="#e8c020" stroke="#654" stroke-width=".6"/></svg>
<svg style="left:1118px;top:637px" width="6" height="4"><path d="M0 0h6l-3 3.500z" fill="#6a7080"/></svg>
<div style="left:1145px;top:629px;width:14px;height:9px;background:#2a3a9a;"></div>
<svg style="left:1148px;top:630px" width="8" height="7"><circle cx="4" cy="3.500" r="2.500" fill="none" stroke="#e8d020" stroke-width="1" stroke-dasharray="1 1"/></svg>
<svg style="left:1147px;top:640px" width="11" height="9" viewBox="0 0 11 9"><path d="M0.500 3l9-2.500v8h-9z" fill="#ddd" stroke="#000" stroke-width="1.500"/></svg>
<svg style="left:1164px;top:641px" width="3" height="3"><path d="M0 0h3v3z" fill="#556"/></svg>
<div style="left:1186px;top:629px;width:14px;height:9px;background:#2a3a9a;"></div>
<svg style="left:1189px;top:630px" width="8" height="7"><circle cx="4" cy="3.500" r="2.500" fill="none" stroke="#e8d020" stroke-width="1" stroke-dasharray="1 1"/></svg>
<svg style="left:1183px;top:640px" width="19" height="9" viewBox="0 0 19 9"><path d="M0 3h6M0 6h6M4 1l3 2l-3 2M4 4l3 2l-3 2" stroke="#000" stroke-width="1.200" fill="none"/><path d="M9.500 3l8-2.500v8h-8z" fill="#ddd" stroke="#000" stroke-width="1.500"/></svg>
<div style="left:1px;top:652px;width:441px;height:414px;background:#d3dae5;"></div>
<div style="left:1px;top:652px;width:441px;height:20px;background:#d0d8e4;"></div>
<span class="t" style="left:6px;top:655px;font-size:12.3px;letter-spacing:-0.427px;color:#4a4e58;">Project Navigator - Data</span>
<svg style="left:410px;top:656px" width="8" height="10"><path d="M2 0.500h4M2.500 0.500v5M5.500 0.500v5M0.500 5.500h7M4 5.500v4" stroke="#555" stroke-width="1" fill="none"/></svg>
<svg style="left:427px;top:657px" width="9" height="9"><path d="M0.500 0.500l8 8M8.500 0.500l-8 8" stroke="#555" stroke-width="1.200"/></svg>
<div style="left:4px;top:673px;width:437px;height:368px;background:#fcfcf7;border:1px solid #aab2c0;"></div>
<div style="left:5px;top:674px;width:416px;height:349px;overflow:hidden;">
<div style="left:11px;top:0px;width:1px;height:4px;background-image:linear-gradient(#808080 50%,transparent 50%);background-size:1px 2px;"></div>
<div style="left:7px;top:6px;width:9px;height:9px;background:#fff;border:1px solid #9098a8;"></div>
<div style="left:9px;top:10px;width:5px;height:1px;background:#334;"></div>
<div style="left:16px;top:10px;width:7px;height:1px;background-image:linear-gradient(90deg,#808080 50%,transparent 50%);background-size:2px 1px;"></div>
<svg style="left:24px;top:2px" width="14" height="16" viewBox="0 0 14 16"><path d="M2.500 0.500h8l3 3v12h-11z" fill="#e8ecf4" stroke="#555"/><path d="M4 5h7M4 7.500h7M4 10h7M4 12.500h5" stroke="#6a7a9a" stroke-width=".9"/><path d="M0 7l5-3v6z" fill="#3a5ab0"/></svg>
<span class="t" style="left:43px;top:4px;font-size:12.3px;letter-spacing:-0.325px;font-weight:bold;">selection_test [desktop]</span>
<div style="left:30px;top:18px;width:1px;height:340px;background-image:linear-gradient(#808080 50%,transparent 50%);background-size:1px 2px;"></div>
<div style="left:26px;top:24px;width:9px;height:9px;background:#fff;border:1px solid #9098a8;"></div>
<div style="left:28px;top:28px;width:5px;height:1px;background:#334;"></div>
<div style="left:35px;top:28px;width:7px;height:1px;background-image:linear-gradient(90deg,#808080 50%,transparent 50%);background-size:2px 1px;"></div>
<svg style="left:41px;top:20px" width="17" height="15" viewBox="0 0 17 15"><path d="M1.500 4c0-1 .5-1.500 1.500-1.500h3l1.500 1.500h6v3h-12z" fill="#c8a828" stroke="#6a5408" stroke-width=".9"/><path d="M0.500 6.500h13l2 6.500h-13z" fill="#e8cc48" stroke="#6a5408" stroke-width=".9"/></svg>
<span class="t" style="left:62px;top:22px;font-size:12.3px;letter-spacing:-0.290px;">Model Data</span>
<div style="left:49px;top:36px;width:1px;height:320px;background-image:linear-gradient(#808080 50%,transparent 50%);background-size:1px 2px;"></div>
<div style="left:45px;top:42px;width:9px;height:9px;background:#fff;border:1px solid #9098a8;"></div>
<div style="left:47px;top:46px;width:5px;height:1px;background:#334;"></div>
<div style="left:49px;top:44px;width:1px;height:5px;background:#334;"></div>
<div style="left:54px;top:46px;width:7px;height:1px;background-image:linear-gradient(90deg,#808080 50%,transparent 50%);background-size:2px 1px;"></div>
<svg style="left:62px;top:38px" width="16" height="15" viewBox="0 0 16 15"><path d="M1.500 3.500c0-1 .5-1.500 1.500-1.500h3l1.500 1.500h6c1 0 1.500 .5 1.500 1.500v7.500c0 1-.5 1.500-1.500 1.500h-10.500c-1 0-1.500-.5-1.500-1.500z" fill="#e8cc48" stroke="#7a6410" stroke-width=".9"/><path d="M2 6h12.500v6.500h-12.500z" fill="#f4e070"/><circle cx="8" cy="9" r="1.500" fill="#e02020"/></svg>
<span class="t" style="left:81px;top:40px;font-size:12.3px;letter-spacing:-0.111px;">Nodes</span>
<div style="left:45px;top:60px;width:9px;height:9px;background:#fff;border:1px solid #9098a8;"></div>
<div style="left:47px;top:64px;width:5px;height:1px;background:#334;"></div>
<div style="left:49px;top:62px;width:1px;height:5px;background:#334;"></div>
<div style="left:54px;top:64px;width:7px;height:1px;background-image:linear-gradient(90deg,#808080 50%,transparent 50%);background-size:2px 1px;"></div>
<svg style="left:62px;top:56px" width="16" height="15" viewBox="0 0 16 15"><path d="M1.500 3.500c0-1 .5-1.500 1.500-1.500h3l1.500 1.500h6c1 0 1.500 .5 1.500 1.500v7.500c0 1-.5 1.500-1.500 1.500h-10.500c-1 0-1.500-.5-1.500-1.500z" fill="#e8cc48" stroke="#7a6410" stroke-width=".9"/><path d="M2 6h12.500v6.500h-12.500z" fill="#f4e070"/><path d="M4 12l8-6" stroke="#e03020" stroke-width="1.500"/></svg>
<span class="t" style="left:81px;top:58px;font-size:12.3px;letter-spacing:-0.481px;">Lines</span>
<div style="left:45px;top:78px;width:9px;height:9px;background:#fff;border:1px solid #9098a8;"></div>
<div style="left:47px;top:82px;width:5px;height:1px;background:#334;"></div>
<div style="left:49px;top:80px;width:1px;height:5px;background:#334;"></div>
<div style="left:54px;top:82px;width:7px;height:1px;background-image:linear-gradient(90deg,#808080 50%,transparent 50%);background-size:2px 1px;"></div>
<svg style="left:62px;top:74px" width="16" height="15" viewBox="0 0 16 15"><path d="M1.500 3.500c0-1 .5-1.500 1.500-1.500h3l1.500 1.500h6c1 0 1.500 .5 1.500 1.500v7.500c0 1-.5 1.500-1.500 1.500h-10.500c-1 0-1.500-.5-1.500-1.500z" fill="#e8cc48" stroke="#7a6410" stroke-width=".9"/><path d="M2 6h12.500v6.500h-12.500z" fill="#f4e070"/><rect x="5" y="6" width="6" height="6" fill="#4060c0"/><rect x="6" y="7" width="2" height="3" fill="#e0c020"/></svg>
<span class="t" style="left:81px;top:76px;font-size:12.3px;letter-spacing:-0.211px;">Materials</span>
<div style="left:50px;top:100px;width:11px;height:1px;background-image:linear-gradient(90deg,#808080 50%,transparent 50%);background-size:2px 1px;"></div>
<svg style="left:62px;top:92px" width="16" height="15" viewBox="0 0 16 15"><path d="M1.500 3.500c0-1 .5-1.500 1.500-1.500h3l1.500 1.500h6c1 0 1.500 .5 1.500 1.500v7.500c0 1-.5 1.500-1.500 1.500h-10.500c-1 0-1.500-.5-1.500-1.500z" fill="#e8cc48" stroke="#7a6410" stroke-width=".9"/><path d="M2 6h12.500v6.500h-12.500z" fill="#f4e070"/><path d="M4 10l3-4h6l-3 4z" fill="#5080d0"/></svg>
<span class="t" style="left:81px;top:94px;font-size:12.3px;letter-spacing:-0.567px;">Surfaces</span>
<div style="left:50px;top:118px;width:11px;height:1px;background-image:linear-gradient(90deg,#808080 50%,transparent 50%);background-size:2px 1px;"></div>
<svg style="left:62px;top:110px" width="16" height="15" viewBox="0 0 16 15"><path d="M1.500 3.500c0-1 .5-1.500 1.500-1.500h3l1.500 1.500h6c1 0 1.500 .5 1.500 1.500v7.500c0 1-.5 1.500-1.500 1.500h-10.500c-1 0-1.500-.5-1.500-1.500z" fill="#e8cc48" stroke="#7a6410" stroke-width=".9"/><path d="M2 6h12.500v6.500h-12.500z" fill="#f4e070"/><rect x="5" y="6" width="6" height="6" fill="#5070c0" stroke="#234"/></svg>
<span class="t" style="left:81px;top:112px;font-size:12.3px;letter-spacing:-0.584px;">Solids</span>
<div style="left:50px;top:136px;width:11px;height:1px;background-image:linear-gradient(90deg,#808080 50%,transparent 50%);background-size:2px 1px;"></div>
<svg style="left:62px;top:128px" width="16" height="15" viewBox="0 0 16 15"><path d="M1.500 3.500c0-1 .5-1.500 1.500-1.500h3l1.500 1.500h6c1 0 1.500 .5 1.500 1.500v7.500c0 1-.5 1.500-1.500 1.500h-10.500c-1 0-1.500-.5-1.500-1.500z" fill="#e8cc48" stroke="#7a6410" stroke-width=".9"/><path d="M2 6h12.500v6.500h-12.500z" fill="#f4e070"/><rect x="4.500" y="6.500" width="7" height="5" fill="#88a" stroke="#335"/><rect x="6.500" y="8" width="3" height="2" fill="#f0d060"/></svg>
<span class="t" style="left:81px;top:130px;font-size:12.3px;letter-spacing:-0.207px;">Openings</span>
<div style="left:45px;top:150px;width:9px;height:9px;background:#fff;border:1px solid #9098a8;"></div>
<div style="left:47px;top:154px;width:5px;height:1px;background:#334;"></div>
<div style="left:49px;top:152px;width:1px;height:5px;background:#334;"></div>
<div style="left:54px;top:154px;width:7px;height:1px;background-image:linear-gradient(90deg,#808080 50%,transparent 50%);background-size:2px 1px;"></div>
<svg style="left:62px;top:146px" width="16" height="15" viewBox="0 0 16 15"><path d="M1.500 3.500c0-1 .5-1.500 1.500-1.500h3l1.500 1.500h6c1 0 1.500 .5 1.500 1.500v7.500c0 1-.5 1.500-1.500 1.500h-10.500c-1 0-1.500-.5-1.500-1.500z" fill="#e8cc48" stroke="#7a6410" stroke-width=".9"/><path d="M2 6h12.500v6.500h-12.500z" fill="#f4e070"/><path d="M8 6l-3 6h6z" fill="#30a040"/><circle cx="8" cy="6" r="1.300" fill="#e02020"/></svg>
<span class="t" style="left:81px;top:148px;font-size:12.3px;letter-spacing:-0.199px;">Nodal Supports</span>
<div style="left:50px;top:172px;width:11px;height:1px;background-image:linear-gradient(90deg,#808080 50%,transparent 50%);background-size:2px 1px;"></div>
<svg style="left:62px;top:164px" width="16" height="15" viewBox="0 0 16 15"><path d="M1.500 3.500c0-1 .5-1.500 1.500-1.500h3l1.500 1.500h6c1 0 1.500 .5 1.500 1.500v7.500c0 1-.5 1.500-1.500 1.500h-10.500c-1 0-1.500-.5-1.500-1.500z" fill="#e8cc48" stroke="#7a6410" stroke-width=".9"/><path d="M2 6h12.500v6.500h-12.500z" fill="#f4e070"/><path d="M4 8h8" stroke="#e02020" stroke-width="1.300"/><path d="M5 9l-1 3h3zM11 9l-1 3h3z" fill="#30a040"/></svg>
<span class="t" style="left:81px;top:166px;font-size:12.3px;letter-spacing:-0.300px;">Line Supports</span>
<div style="left:50px;top:190px;width:11px;height:1px;background-image:linear-gradient(90deg,#808080 50%,transparent 50%);background-size:2px 1px;"></div>
<svg style="left:62px;top:182px" width="16" height="15" viewBox="0 0 16 15"><path d="M1.500 3.500c0-1 .5-1.500 1.500-1.500h3l1.500 1.500h6c1 0 1.500 .5 1.500 1.500v7.500c0 1-.5 1.500-1.500 1.500h-10.500c-1 0-1.500-.5-1.500-1.500z" fill="#e8cc48" stroke="#7a6410" stroke-width=".9"/><path d="M2 6h12.500v6.500h-12.500z" fill="#f4e070"/><rect x="5" y="6" width="6" height="5" fill="#30a040"/><path d="M5 12h6" stroke="#246"/></svg>
<span class="t" style="left:81px;top:184px;font-size:12.3px;letter-spacing:-0.377px;">Surface Supports</span>
<div style="left:50px;top:208px;width:11px;height:1px;background-image:linear-gradient(90deg,#808080 50%,transparent 50%);background-size:2px 1px;"></div>
<svg style="left:62px;top:200px" width="16" height="15" viewBox="0 0 16 15"><path d="M1.500 3.500c0-1 .5-1.500 1.500-1.500h3l1.500 1.500h6c1 0 1.500 .5 1.500 1.500v7.500c0 1-.5 1.500-1.500 1.500h-10.500c-1 0-1.500-.5-1.500-1.500z" fill="#e8cc48" stroke="#7a6410" stroke-width=".9"/><path d="M2 6h12.500v6.500h-12.500z" fill="#f4e070"/><path d="M4 10l8-2" stroke="#88a" stroke-width="1.300"/><circle cx="8" cy="9" r="1.500" fill="#fff" stroke="#446"/></svg>
<span class="t" style="left:81px;top:202px;font-size:12.3px;letter-spacing:-0.269px;">Line Hinges</span>
<div style="left:50px;top:226px;width:11px;height:1px;background-image:linear-gradient(90deg,#808080 50%,transparent 50%);background-size:2px 1px;"></div>
<svg style="left:62px;top:218px" width="16" height="15" viewBox="0 0 16 15"><path d="M1.500 3.500c0-1 .5-1.500 1.500-1.500h3l1.500 1.500h6c1 0 1.500 .5 1.500 1.500v7.500c0 1-.5 1.500-1.500 1.500h-10.500c-1 0-1.500-.5-1.500-1.500z" fill="#e8cc48" stroke="#7a6410" stroke-width=".9"/><path d="M2 6h12.500v6.500h-12.500z" fill="#f4e070"/><path d="M4 11l3-4h6l-3 4z" fill="#4070c0" stroke="#234" stroke-width=".6"/></svg>
<span class="t" style="left:81px;top:220px;font-size:12.3px;letter-spacing:-0.389px;">Variable Thicknesses</span>
<div style="left:50px;top:244px;width:11px;height:1px;background-image:linear-gradient(90deg,#808080 50%,transparent 50%);background-size:2px 1px;"></div>
<svg style="left:62px;top:236px" width="16" height="15" viewBox="0 0 16 15"><path d="M1.500 3.500c0-1 .5-1.500 1.500-1.500h3l1.500 1.500h6c1 0 1.500 .5 1.500 1.500v7.500c0 1-.5 1.500-1.500 1.500h-10.500c-1 0-1.500-.5-1.500-1.500z" fill="#e8cc48" stroke="#7a6410" stroke-width=".9"/><path d="M2 6h12.500v6.500h-12.500z" fill="#f4e070"/><path d="M4 11l3-4h6l-3 4z" fill="#c04040" stroke="#234" stroke-width=".6"/></svg>
<span class="t" style="left:81px;top:238px;font-size:12.3px;letter-spacing:-0.209px;">Orthotropic Surfaces and Membranes</span>
<div style="left:45px;top:258px;width:9px;height:9px;background:#fff;border:1px solid #9098a8;"></div>
<div style="left:47px;top:262px;width:5px;height:1px;background:#334;"></div>
<div style="left:49px;top:260px;width:1px;height:5px;background:#334;"></div>
<div style="left:54px;top:262px;width:7px;height:1px;background-image:linear-gradient(90deg,#808080 50%,transparent 50%);background-size:2px 1px;"></div>
<svg style="left:62px;top:254px" width="16" height="15" viewBox="0 0 16 15"><path d="M1.500 3.500c0-1 .5-1.500 1.500-1.500h3l1.500 1.500h6c1 0 1.500 .5 1.500 1.500v7.500c0 1-.5 1.500-1.500 1.500h-10.500c-1 0-1.500-.5-1.500-1.500z" fill="#e8cc48" stroke="#7a6410" stroke-width=".9"/><path d="M2 6h12.500v6.500h-12.500z" fill="#f4e070"/><path d="M5 6h6v1.500h-2v3h2v1.500h-6v-1.500h2v-3h-2z" fill="#3040c0"/><path d="M11 6l2-1v6l-2 1z" fill="#c03060"/></svg>
<span class="t" style="left:81px;top:256px;font-size:12.3px;letter-spacing:-0.385px;">Cross-Sections</span>
<div style="left:50px;top:280px;width:11px;height:1px;background-image:linear-gradient(90deg,#808080 50%,transparent 50%);background-size:2px 1px;"></div>
<svg style="left:62px;top:272px" width="16" height="15" viewBox="0 0 16 15"><path d="M1.500 3.500c0-1 .5-1.500 1.500-1.500h3l1.500 1.500h6c1 0 1.500 .5 1.500 1.500v7.500c0 1-.5 1.500-1.500 1.500h-10.500c-1 0-1.500-.5-1.500-1.500z" fill="#e8cc48" stroke="#7a6410" stroke-width=".9"/><path d="M2 6h12.500v6.500h-12.500z" fill="#f4e070"/><path d="M4 9h8" stroke="#c03020" stroke-width="1.300"/><circle cx="6" cy="9" r="1.400" fill="#fff" stroke="#c03020"/></svg>
<span class="t" style="left:81px;top:274px;font-size:12.3px;letter-spacing:-0.139px;">Member Hinges</span>
<div style="left:50px;top:298px;width:11px;height:1px;background-image:linear-gradient(90deg,#808080 50%,transparent 50%);background-size:2px 1px;"></div>
<svg style="left:62px;top:290px" width="16" height="15" viewBox="0 0 16 15"><path d="M1.500 3.500c0-1 .5-1.500 1.500-1.500h3l1.500 1.500h6c1 0 1.500 .5 1.500 1.500v7.500c0 1-.5 1.500-1.500 1.500h-10.500c-1 0-1.500-.5-1.500-1.500z" fill="#e8cc48" stroke="#7a6410" stroke-width=".9"/><path d="M2 6h12.500v6.500h-12.500z" fill="#f4e070"/><path d="M4 12l8-6" stroke="#e03020" stroke-width="1.300"/><path d="M6 12l6-4" stroke="#446" stroke-width=".8"/></svg>
<span class="t" style="left:81px;top:292px;font-size:12.3px;letter-spacing:-0.190px;">Member Eccentricities</span>
<div style="left:50px;top:316px;width:11px;height:1px;background-image:linear-gradient(90deg,#808080 50%,transparent 50%);background-size:2px 1px;"></div>
<svg style="left:62px;top:308px" width="16" height="15" viewBox="0 0 16 15"><path d="M1.500 3.500c0-1 .5-1.500 1.500-1.500h3l1.500 1.500h6c1 0 1.500 .5 1.500 1.500v7.500c0 1-.5 1.500-1.500 1.500h-10.500c-1 0-1.500-.5-1.500-1.500z" fill="#e8cc48" stroke="#7a6410" stroke-width=".9"/><path d="M2 6h12.500v6.500h-12.500z" fill="#f4e070"/><path d="M4 12l8-6" stroke="#e03020" stroke-width="1.300"/><circle cx="8" cy="9" r="1.200" fill="#223"/></svg>
<span class="t" style="left:81px;top:310px;font-size:12.3px;letter-spacing:-0.171px;">Member Divisions</span>
<div style="left:45px;top:330px;width:9px;height:9px;background:#fff;border:1px solid #9098a8;"></div>
<div style="left:47px;top:334px;width:5px;height:1px;background:#334;"></div>
<div style="left:49px;top:332px;width:1px;height:5px;background:#334;"></div>
<div style="left:54px;top:334px;width:7px;height:1px;background-image:linear-gradient(90deg,#808080 50%,transparent 50%);background-size:2px 1px;"></div>
<svg style="left:62px;top:326px" width="16" height="15" viewBox="0 0 16 15"><path d="M1.500 3.500c0-1 .5-1.500 1.500-1.500h3l1.500 1.500h6c1 0 1.500 .5 1.500 1.500v7.500c0 1-.5 1.500-1.500 1.500h-10.500c-1 0-1.500-.5-1.500-1.500z" fill="#e8cc48" stroke="#7a6410" stroke-width=".9"/><path d="M2 6h12.500v6.500h-12.500z" fill="#f4e070"/><path d="M4 12l8-6" stroke="#e03020" stroke-width="1.800"/></svg>
<span class="t" style="left:81px;top:328px;font-size:12.3px;letter-spacing:-0.180px;">Members</span>
<div style="left:50px;top:352px;width:11px;height:1px;background-image:linear-gradient(90deg,#808080 50%,transparent 50%);background-size:2px 1px;"></div>
<svg style="left:62px;top:344px" width="16" height="15" viewBox="0 0 16 15"><path d="M1.500 3.500c0-1 .5-1.500 1.500-1.500h3l1.500 1.500h6c1 0 1.500 .5 1.500 1.500v7.500c0 1-.5 1.500-1.500 1.500h-10.500c-1 0-1.500-.5-1.500-1.500z" fill="#e8cc48" stroke="#7a6410" stroke-width=".9"/><path d="M2 6h12.500v6.500h-12.500z" fill="#f4e070"/><path d="M4 12l8-6" stroke="#4060c0" stroke-width="1.800"/></svg>
<span class="t" style="left:81px;top:346px;font-size:12.3px;letter-spacing:-0.652px;">Ribs</span>
</div>
<div style="left:421px;top:674px;width:16px;height:350px;background:#f0f0f0;"></div>
<div style="left:422px;top:695px;width:14px;height:52px;background:#cdcdcd;"></div>
<svg style="left:425px;top:681px" width="8" height="6"><path d="M0.500 5l3.500-4l3.500 4" stroke="#505050" stroke-width="1.600" fill="none"/></svg>
<svg style="left:425px;top:1012px" width="8" height="6"><path d="M0.500 1l3.500 4l3.500-4" stroke="#505050" stroke-width="1.600" fill="none"/></svg>
<div style="left:5px;top:1023px;width:432px;height:17px;background:#f0f0f0;"></div>
<div style="left:22px;top:1024px;width:249px;height:15px;background:#cdcdcd;"></div>
<svg style="left:9px;top:1027px" width="6" height="9"><path d="M5 0.500l-4 4l4 4" stroke="#505050" stroke-width="1.600" fill="none"/></svg>
<svg style="left:409px;top:1027px" width="6" height="9"><path d="M1 0.500l4 4l-4 4" stroke="#505050" stroke-width="1.600" fill="none"/></svg>
<div style="left:5px;top:1042px;width:47px;height:20px;background:#e4e9f2;border:1px solid #a8d0e0;border-top:none;border-radius:0 0 4px 4px;"></div>
<svg style="left:8px;top:1046px" width="16" height="16" viewBox="0 0 16 16"><rect x="0.500" y="1.500" width="12" height="10" fill="#f0d060" stroke="#8a6a10"/><circle cx="9" cy="9" r="4" fill="#cfe0f8" stroke="#234a90" stroke-width="1.500"/><path d="M12 12l3.500 3.500" stroke="#234a90" stroke-width="2"/></svg>
<span class="t" style="left:26px;top:1049px;font-size:12.3px;letter-spacing:-0.995px;color:#2e3440;">Data</span>
<svg style="left:60px;top:1045px" width="16" height="17" viewBox="0 0 16 17"><rect x="1.500" y="4.500" width="11" height="11" fill="#e8eef8" stroke="#3a4a70"/><path d="M3 8h8M3 10.500h8M3 13h8" stroke="#4a6ab0"/><path d="M3 4l9-3l2 2l-8 3z" fill="#889" stroke="#334" stroke-width=".6"/></svg>
<span class="t" style="left:79px;top:1049px;font-size:12.3px;letter-spacing:-0.619px;color:#4a5060;">Display</span>
<svg style="left:128px;top:1045px" width="16" height="17" viewBox="0 0 16 17"><path d="M3 14l6-12l2 1l-5 12z" fill="#88a0d0" stroke="#3a4a90" stroke-width=".8"/><path d="M1 15h12" stroke="#3a4a90" stroke-width="1.500"/><circle cx="11" cy="3" r="2" fill="none" stroke="#3a4a90"/></svg>
<span class="t" style="left:144px;top:1049px;font-size:12.3px;letter-spacing:-0.518px;color:#4a5060;">Views</span>
<div style="left:442px;top:652px;width:5px;height:414px;background:#d3dae5;"></div>
<div style="left:446px;top:652px;width:762px;height:1px;background:#8a8e96;"></div>
<div style="left:446px;top:652px;width:1px;height:412px;background:#8a8e96;"></div>
<div style="left:447px;top:1063px;width:762px;height:3px;background:#f4f4f4;"></div>
<div style="left:1207px;top:652px;width:2px;height:414px;background:#d8d8d8;"></div>
<svg style="left:447px;top:653px" width="760" height="410.5" viewBox="447 653 760 410.5" font-family="Liberation Sans, sans-serif"><rect x="447" y="653" width="760" height="410.5" fill="#0a0a0a"/><path d="M459 711h1v1h-1zM459 770h1v1h-1zM459 829h1v1h-1zM459 888h1v1h-1zM459 947h1v1h-1zM459 1006h1v1h-1zM512 660h1v1h-1zM512 719h1v1h-1zM512 778h1v1h-1zM512 837h1v1h-1zM512 896h1v1h-1zM512 955h1v1h-1zM512 1014h1v1h-1zM566 668h1v1h-1zM566 727h1v1h-1zM566 786h1v1h-1zM566 845h1v1h-1zM566 904h1v1h-1zM566 963h1v1h-1zM566 1022h1v1h-1zM619 676h1v1h-1zM619 735h1v1h-1zM619 794h1v1h-1zM619 853h1v1h-1zM619 912h1v1h-1zM619 971h1v1h-1zM619 1030h1v1h-1zM672 684h1v1h-1zM672 743h1v1h-1zM672 802h1v1h-1zM672 861h1v1h-1zM672 920h1v1h-1zM672 979h1v1h-1zM672 1038h1v1h-1zM725 691h1v1h-1zM725 750h1v1h-1zM725 809h1v1h-1zM725 868h1v1h-1zM725 927h1v1h-1zM725 986h1v1h-1zM725 1045h1v1h-1zM778 699h1v1h-1zM778 758h1v1h-1zM778 817h1v1h-1zM778 876h1v1h-1zM778 935h1v1h-1zM778 994h1v1h-1zM778 1053h1v1h-1zM831 707h1v1h-1zM831 766h1v1h-1zM831 825h1v1h-1zM831 884h1v1h-1zM831 943h1v1h-1zM831 1002h1v1h-1zM831 1061h1v1h-1zM884 656h1v1h-1zM884 715h1v1h-1zM884 774h1v1h-1zM884 833h1v1h-1zM884 892h1v1h-1zM884 951h1v1h-1zM884 1010h1v1h-1zM937 664h1v1h-1zM937 723h1v1h-1zM937 782h1v1h-1zM937 841h1v1h-1zM937 900h1v1h-1zM937 959h1v1h-1zM937 1018h1v1h-1zM990 672h1v1h-1zM990 731h1v1h-1zM990 790h1v1h-1zM990 849h1v1h-1zM990 908h1v1h-1zM990 967h1v1h-1zM990 1026h1v1h-1zM1043 680h1v1h-1zM1043 739h1v1h-1zM1043 798h1v1h-1zM1043 857h1v1h-1zM1043 916h1v1h-1zM1043 975h1v1h-1zM1043 1034h1v1h-1zM1096 688h1v1h-1zM1096 747h1v1h-1zM1096 806h1v1h-1zM1096 865h1v1h-1zM1096 924h1v1h-1zM1096 983h1v1h-1zM1096 1042h1v1h-1zM1149 695h1v1h-1zM1149 754h1v1h-1zM1149 813h1v1h-1zM1149 872h1v1h-1zM1149 931h1v1h-1zM1149 990h1v1h-1zM1149 1049h1v1h-1zM1202 703h1v1h-1zM1202 762h1v1h-1zM1202 821h1v1h-1zM1202 880h1v1h-1zM1202 939h1v1h-1zM1202 998h1v1h-1zM1202 1057h1v1h-1z" fill="#dfe8d4"/><path d="M514 653V1064" stroke="#14605e" stroke-width="2"/><path d="M447 887.700L1207 1000.600" stroke="#167472" stroke-width="1.300"/><path d="M1043.500 653V1064" stroke="#3a3a3a" stroke-width="1"/><polygon points="511.4,891.0 828.9,790.4 833.1,803.4 515.6,904.0" fill="#6a68dc"/><polygon points="511.4,891.0 828.9,790.4 830.3,794.7 512.8,895.3" fill="#7674e8"/><polygon points="514.9,902.1 832.4,801.5 833.1,803.4 515.6,904.0" fill="#5c5acc"/><polygon points="828.4,938.5 1146.9,808.2 1152.1,820.8 833.6,951.1" fill="#6a68dc"/><polygon points="828.4,938.5 1146.9,808.2 1148.6,812.4 830.1,942.7" fill="#7674e8"/><polygon points="832.8,949.2 1151.3,818.9 1152.1,820.8 833.6,951.1" fill="#5c5acc"/><polygon points="513.9,772.6 831.4,790.1 830.6,803.7 513.1,786.2" fill="#6a68dc"/><polygon points="513.9,772.6 831.4,790.1 831.1,794.6 513.6,777.1" fill="#7674e8"/><polygon points="513.2,784.2 830.7,801.7 830.6,803.7 513.1,786.2" fill="#5c5acc"/><polygon points="831.4,790.1 1149.9,807.7 1149.1,821.3 830.6,803.7" fill="#6a68dc"/><polygon points="831.4,790.1 1149.9,807.7 1149.6,812.2 831.1,794.6" fill="#7674e8"/><polygon points="830.7,801.7 1149.2,819.3 1149.1,821.3 830.6,803.7" fill="#5c5acc"/><polygon points="514.5,890.8 832.0,938.1 830.0,951.5 512.5,904.2" fill="#6a68dc"/><polygon points="514.5,890.8 832.0,938.1 831.3,942.5 513.8,895.2" fill="#7674e8"/><polygon points="512.8,902.2 830.3,949.5 830.0,951.5 512.5,904.2" fill="#5c5acc"/><polygon points="832.0,938.1 1150.5,985.5 1148.5,998.9 830.0,951.5" fill="#6a68dc"/><polygon points="832.0,938.1 1150.5,985.5 1149.8,989.9 831.3,942.5" fill="#7674e8"/><polygon points="830.3,949.5 1148.8,996.9 1148.5,998.9 830.0,951.5" fill="#5c5acc"/><polygon points="507.0,778.0 507.0,898.0 520.0,898.0 520.0,778.0" fill="#6a68dc"/><polygon points="507.0,778.0 507.0,898.0 509.5,898.0 509.5,778.0" fill="#5c5acc"/><polygon points="518.5,778.0 518.5,898.0 520.0,898.0 520.0,778.0" fill="#5f5dd0"/><polygon points="824.2,795.0 824.2,946.0 837.8,946.0 837.8,795.0" fill="#6a68dc"/><polygon points="824.2,795.0 824.2,946.0 826.7,946.0 826.7,795.0" fill="#5c5acc"/><polygon points="836.3,795.0 836.3,946.0 837.8,946.0 837.8,795.0" fill="#5f5dd0"/><polygon points="1142.8,814.5 1142.8,992.0 1156.2,992.0 1156.2,814.5" fill="#6a68dc"/><polygon points="1142.8,814.5 1142.8,992.0 1145.3,992.0 1145.3,814.5" fill="#5c5acc"/><polygon points="1154.7,814.5 1154.7,992.0 1156.2,992.0 1156.2,814.5" fill="#5f5dd0"/><path d="M507 779l13 1M824 796l14 1M1143 813l13 1" stroke="#8a88f0" stroke-width=".6"/><path d="M513 898l-12.500 11l17 2.600l8.300-4.600z" fill="#1aa02c"/><path d="M513 898l5 13.500l8-4.500z" fill="#148424"/><path d="M679.0 788.6L680.9 818.0" stroke="#18ccdc" stroke-width="1.6"/><polygon points="681.5,828.0 677.9,818.2 683.9,817.8" fill="#1a98a4"/><text x="685.0" y="845.0" fill="#18ccdc" font-size="10" text-anchor="middle">z</text><path d="M679.0 788.6L667.3 793.8" stroke="#16de16" stroke-width="1.8"/><polygon points="660.0,797.0 666.1,791.0 668.5,796.5" fill="#14a814"/><text x="655.0" y="803.0" fill="#16de16" font-size="10" text-anchor="middle">y</text><path d="M679.0 788.6L705.0 789.9" stroke="#fa1010" stroke-width="1.8"/><polygon points="714.0,790.4 704.9,792.7 705.2,787.1" fill="#d80c0c"/><text x="724.0" y="796.0" fill="#fa1010" font-size="10" text-anchor="middle">x</text><path d="M997.8 805.6L999.7 835.3" stroke="#18ccdc" stroke-width="1.6"/><polygon points="1000.3,845.3 996.7,835.5 1002.7,835.1" fill="#1a98a4"/><text x="1002.0" y="859.4" fill="#18ccdc" font-size="10" text-anchor="middle">z</text><path d="M997.8 805.6L985.4 810.7" stroke="#16de16" stroke-width="1.8"/><polygon points="978.0,813.8 984.2,808.0 986.5,813.5" fill="#14a814"/><text x="973.5" y="820.0" fill="#16de16" font-size="10" text-anchor="middle">y</text><path d="M997.8 805.6L1023.5 806.9" stroke="#fa1010" stroke-width="1.8"/><polygon points="1032.5,807.4 1023.4,809.7 1023.7,804.1" fill="#d80c0c"/><text x="1042.0" y="813.0" fill="#fa1010" font-size="10" text-anchor="middle">x</text><path d="M679.0 844.5L688.6 871.0" stroke="#18ccdc" stroke-width="1.6"/><polygon points="692.0,880.4 685.8,872.0 691.4,870.0" fill="#1a98a4"/><text x="697.8" y="896.0" fill="#18ccdc" font-size="10" text-anchor="middle">z</text><path d="M679.0 844.5L668.0 849.2" stroke="#16de16" stroke-width="1.8"/><polygon points="660.6,852.3 666.8,846.4 669.1,851.9" fill="#14a814"/><text x="655.0" y="859.0" fill="#16de16" font-size="10" text-anchor="middle">y</text><path d="M679.0 844.5L704.9 834.8" stroke="#fa1010" stroke-width="1.8"/><polygon points="713.3,831.6 705.9,837.4 703.9,832.1" fill="#d80c0c"/><text x="720.5" y="835.5" fill="#fa1010" font-size="10" text-anchor="middle">x</text><path d="M997.5 875.5L1007.6 901.4" stroke="#18ccdc" stroke-width="1.6"/><polygon points="1011.2,910.7 1004.8,902.5 1010.4,900.3" fill="#1a98a4"/><text x="1018.0" y="927.0" fill="#18ccdc" font-size="10" text-anchor="middle">z</text><path d="M997.5 875.5L985.4 880.4" stroke="#16de16" stroke-width="1.8"/><polygon points="978.0,883.4 984.3,877.6 986.5,883.2" fill="#14a814"/><text x="973.5" y="890.0" fill="#16de16" font-size="10" text-anchor="middle">y</text><path d="M997.5 875.5L1020.4 867.0" stroke="#fa1010" stroke-width="1.8"/><polygon points="1028.8,863.8 1021.4,869.6 1019.4,864.3" fill="#d80c0c"/><text x="1038.0" y="865.0" fill="#fa1010" font-size="10" text-anchor="middle">x</text><path d="M679.0 921.5L679.4 950.5" stroke="#18ccdc" stroke-width="1.6"/><polygon points="679.5,960.5 676.4,950.5 682.4,950.5" fill="#1a98a4"/><text x="681.0" y="975.0" fill="#18ccdc" font-size="10" text-anchor="middle">z</text><path d="M679.0 921.5L668.1 926.2" stroke="#16de16" stroke-width="1.8"/><polygon points="660.7,929.3 666.9,923.4 669.2,928.9" fill="#14a814"/><text x="655.0" y="936.0" fill="#16de16" font-size="10" text-anchor="middle">y</text><path d="M679.0 921.5L706.5 925.3" stroke="#fa1010" stroke-width="1.8"/><polygon points="715.4,926.5 706.1,928.0 706.9,922.5" fill="#d80c0c"/><text x="724.0" y="933.0" fill="#fa1010" font-size="10" text-anchor="middle">x</text><path d="M997.5 969.2L997.9 997.0" stroke="#18ccdc" stroke-width="1.6"/><polygon points="998.0,1007.0 994.9,997.0 1000.9,997.0" fill="#1a98a4"/><text x="999.0" y="1022.0" fill="#18ccdc" font-size="10" text-anchor="middle">z</text><path d="M997.5 969.2L985.4 974.0" stroke="#16de16" stroke-width="1.8"/><polygon points="978.0,977.0 984.3,971.2 986.5,976.8" fill="#14a814"/><text x="973.0" y="984.0" fill="#16de16" font-size="10" text-anchor="middle">y</text><path d="M997.5 969.2L1023.8 972.7" stroke="#fa1010" stroke-width="1.8"/><polygon points="1032.7,973.9 1023.4,975.5 1024.1,969.9" fill="#d80c0c"/><text x="1042.0" y="981.0" fill="#fa1010" font-size="10" text-anchor="middle">x</text><path d="M512.5 833.6L538.7 837.8" stroke="#18ccdc" stroke-width="1.6"/><polygon points="548.6,839.4 538.3,840.8 539.2,834.9" fill="#1a98a4"/><text x="557.0" y="846.0" fill="#18ccdc" font-size="10" text-anchor="middle">z</text><path d="M512.5 833.6L500.1 838.9" stroke="#16de16" stroke-width="1.8"/><polygon points="492.7,842.0 498.9,836.1 501.2,841.6" fill="#14a814"/><text x="488.0" y="849.0" fill="#16de16" font-size="10" text-anchor="middle">y</text><path d="M512.5 833.6L512.5 804.0" stroke="#fa1010" stroke-width="1.8"/><polygon points="512.5,795.0 515.3,804.0 509.7,804.0" fill="#d80c0c"/><text x="514.0" y="791.0" fill="#fa1010" font-size="10" text-anchor="middle">x</text><path d="M831.3 866.3L856.6 869.9" stroke="#18ccdc" stroke-width="1.6"/><polygon points="866.5,871.3 856.2,872.9 857.0,866.9" fill="#1a98a4"/><text x="874.5" y="878.0" fill="#18ccdc" font-size="10" text-anchor="middle">z</text><path d="M831.3 866.3L818.3 871.1" stroke="#16de16" stroke-width="1.8"/><polygon points="810.8,873.8 817.3,868.2 819.3,873.9" fill="#14a814"/><text x="806.0" y="880.0" fill="#16de16" font-size="10" text-anchor="middle">y</text><path d="M831.3 866.3L831.3 837.0" stroke="#fa1010" stroke-width="1.8"/><polygon points="831.3,828.0 834.1,837.0 828.5,837.0" fill="#d80c0c"/><text x="832.0" y="823.0" fill="#fa1010" font-size="10" text-anchor="middle">x</text><path d="M1149.5 897.8L1173.8 901.9" stroke="#18ccdc" stroke-width="1.6"/><polygon points="1183.7,903.6 1173.3,904.9 1174.3,899.0" fill="#1a98a4"/><text x="1193.0" y="910.0" fill="#18ccdc" font-size="10" text-anchor="middle">z</text><path d="M1149.5 897.8L1137.6 902.6" stroke="#16de16" stroke-width="1.8"/><polygon points="1130.2,905.6 1136.5,899.8 1138.7,905.4" fill="#14a814"/><text x="1124.7" y="914.0" fill="#16de16" font-size="10" text-anchor="middle">y</text><path d="M1149.5 897.8L1149.5 869.7" stroke="#fa1010" stroke-width="1.8"/><polygon points="1149.5,860.7 1152.3,869.7 1146.7,869.7" fill="#d80c0c"/><text x="1150.0" y="855.0" fill="#fa1010" font-size="10" text-anchor="middle">x</text><path d="M513.0 896.5L513.0 925.0" stroke="#18ccdc" stroke-width="1.6"/><polygon points="513.0,935.0 510.0,925.0 516.0,925.0" fill="#1a98a4"/><text x="513.5" y="948.5" fill="#2ae4f4" font-size="9.5" text-anchor="middle">Z</text><path d="M513.0 896.5L503.2 901.4" stroke="#16de16" stroke-width="1.8"/><polygon points="496.0,905.0 501.8,898.7 504.5,904.1" fill="#14a814"/><text x="488.5" y="912.0" fill="#16de16" font-size="9.5" text-anchor="middle">Y</text><path d="M513.0 896.5L539.1 900.5" stroke="#fa1010" stroke-width="2"/><polygon points="549.0,902.0 538.7,903.5 539.6,897.5" fill="#d80c0c"/><text x="556.5" y="907.0" fill="#fa1010" font-size="9.5" text-anchor="middle">X</text><path d="M502.0 967.0L502.0 995.0" stroke="#18ccdc" stroke-width="1.6"/><polygon points="502.0,1005.0 499.0,995.0 505.0,995.0" fill="#1a98a4"/><text x="502.5" y="1019.0" fill="#2ae4f4" font-size="9.5" text-anchor="middle">Z</text><path d="M502.0 967.0L490.4 971.9" stroke="#16de16" stroke-width="1.8"/><polygon points="483.0,975.0 489.2,969.1 491.5,974.7" fill="#14a814"/><text x="477.5" y="981.6" fill="#16de16" font-size="9.5" text-anchor="middle">Y</text><path d="M502.0 967.0L528.1 970.6" stroke="#fa1010" stroke-width="2"/><polygon points="538.0,972.0 527.7,973.6 528.5,967.7" fill="#d80c0c"/><text x="545.5" y="977.0" fill="#fa1010" font-size="9.5" text-anchor="middle">X</text><g transform="rotate(3 640.8 785.7)"><rect x="631.8" y="779.0" width="18" height="13.5" fill="#000"/><text x="640.8" y="789.8" fill="#16de16" font-size="11.5" text-anchor="middle" font-weight="bold">M1</text></g><g transform="rotate(3 958.7 803.8)"><rect x="949.5" y="797.0" width="18.5" height="13.5" fill="#000"/><text x="958.7" y="807.9" fill="#16de16" font-size="11.5" text-anchor="middle" font-weight="bold">M2</text></g><g transform="rotate(-17 640.5 857.5)"><rect x="631.0" y="850.8" width="19" height="13.5" fill="#000"/><text x="640.5" y="861.6" fill="#16de16" font-size="11.5" text-anchor="middle" font-weight="bold">M4</text></g><g transform="rotate(-22 958.5 893.0)"><rect x="949.0" y="886.2" width="19" height="13.5" fill="#000"/><text x="958.5" y="897.1" fill="#16de16" font-size="11.5" text-anchor="middle" font-weight="bold">M5</text></g><g transform="rotate(8 640.5 916.3)"><rect x="631.0" y="909.5" width="19" height="13.5" fill="#000"/><text x="640.5" y="920.4" fill="#16de16" font-size="11.5" text-anchor="middle" font-weight="bold">M9</text></g><g transform="rotate(8 958.5 963.3)"><rect x="949.0" y="956.5" width="19" height="13.5" fill="#000"/><text x="958.5" y="967.4" fill="#16de16" font-size="11.5" text-anchor="middle" font-weight="bold">M3</text></g><g transform="rotate(-90 513.5 849.2)"><rect x="503.8" y="842.7" width="19.5" height="13" fill="#000"/><text x="513.5" y="853.3" fill="#16de16" font-size="11.5" text-anchor="middle" font-weight="bold">M6</text></g><g transform="rotate(-90 831.0 885.8)"><rect x="821.8" y="879.0" width="18.5" height="13.6" fill="#000"/><text x="831.0" y="889.9" fill="#16de16" font-size="11.5" text-anchor="middle" font-weight="bold">M7</text></g><g transform="rotate(-90 1149.5 921.0)"><rect x="1140.0" y="914.5" width="19" height="13" fill="#000"/><text x="1149.5" y="925.1" fill="#16de16" font-size="11.5" text-anchor="middle" font-weight="bold">M8</text></g><g><rect x="699.7" y="784.6" width="9.8" height="12" fill="#000"/><text x="704.6" y="794.0" fill="#2ae4f4" font-size="9.5" text-anchor="middle">2</text></g><g><rect x="1018.2" y="800.2" width="9.5" height="13.5" fill="#000"/><text x="1023.0" y="810.4" fill="#2ae4f4" font-size="9.5" text-anchor="middle">3</text></g><g><rect x="699.8" y="832.8" width="11.5" height="12.5" fill="#000"/><text x="705.5" y="842.4" fill="#2ae4f4" font-size="9.5" text-anchor="middle">11</text></g><g><rect x="1016.8" y="860.8" width="11.5" height="12.5" fill="#000"/><text x="1022.5" y="870.4" fill="#2ae4f4" font-size="9.5" text-anchor="middle">13</text></g><g><rect x="698.8" y="919.8" width="11.5" height="12.5" fill="#000"/><text x="704.5" y="929.4" fill="#2ae4f4" font-size="9.5" text-anchor="middle">19</text></g><g><rect x="1017.8" y="967.0" width="9.5" height="13" fill="#000"/><text x="1022.5" y="976.9" fill="#2ae4f4" font-size="9.5" text-anchor="middle">7</text></g><g><rect x="507.0" y="820.7" width="13" height="13" fill="#000" stroke="#6a68dc" stroke-width=".7"/><text x="513.5" y="830.6" fill="#2ae4f4" font-size="9.5" text-anchor="middle">10</text></g><g><rect x="825.0" y="849.0" width="12.5" height="14" fill="#000" stroke="#6a68dc" stroke-width=".7"/><text x="831.2" y="859.4" fill="#2ae4f4" font-size="9.5" text-anchor="middle">12</text></g><g><rect x="1143.3" y="879.5" width="12.8" height="12.5" fill="#000" stroke="#6a68dc" stroke-width=".7"/><text x="1149.7" y="889.2" fill="#2ae4f4" font-size="9.5" text-anchor="middle">14</text></g><g><rect x="516.0" y="763.0" width="9" height="12" fill="#000"/><text x="520.5" y="772.8" fill="#fa1010" font-size="10.5" text-anchor="middle" font-weight="bold">5</text></g><g><rect x="515.0" y="879.7" width="8" height="15" fill="#000"/><text x="519.0" y="891.2" fill="#fa1010" font-size="11" text-anchor="middle" font-weight="bold">1</text></g><g><rect x="496.1" y="872.8" width="7.8" height="15" fill="#000"/><text x="500.0" y="884.3" fill="#16de16" font-size="11" text-anchor="middle" font-weight="bold">1</text></g><g><rect x="833.6" y="779.8" width="9.4" height="14" fill="#000"/><text x="838.3" y="790.6" fill="#fa1010" font-size="10.5" text-anchor="middle" font-weight="bold">6</text></g><g><rect x="833.8" y="928.0" width="13" height="13" fill="#000"/><text x="840.3" y="938.3" fill="#fa1010" font-size="10.5" text-anchor="middle" font-weight="bold">10</text></g><g><rect x="1151.0" y="797.0" width="10" height="15" fill="#000"/><text x="1156.0" y="808.1" fill="#fa1010" font-size="10" text-anchor="middle" font-weight="bold">7</text></g><g><rect x="1152.0" y="976.0" width="12" height="13" fill="#000"/><text x="1158.0" y="986.3" fill="#fa1010" font-size="10.5" text-anchor="middle" font-weight="bold">11</text></g><path d="M512.0 781.4l1.500-3l1.500 3z" fill="#fa1010"/><path d="M512.0 899.5l1.500-3l1.500 3z" fill="#fa1010"/><path d="M829.5 798.9l1.500-3l1.500 3z" fill="#fa1010"/><path d="M829.5 946.8l1.500-3l1.500 3z" fill="#fa1010"/><path d="M1148.0 816.5l1.500-3l1.500 3z" fill="#fa1010"/><path d="M1148.0 994.2l1.500-3l1.500 3z" fill="#fa1010"/><text x="452" y="669" fill="#fff" font-size="11">LC2</text></svg>
<svg style="left:0;top:0;pointer-events:none" width="1211" height="1066" viewBox="0 0 1211 1066"><g stroke="#e0483e" stroke-width="1.700" fill="#e0483e"><path d="M509.800 397.600L1006 791.200"/><polygon stroke="none" points="1010.500,794.700 1001.500,792.200 1005.800,786.800"/><path d="M509.800 462.400L820.500 783.400"/><polygon stroke="none" points="824.200,787.200 815.300,783.700 820.300,778.800"/></g></svg></body></html>
